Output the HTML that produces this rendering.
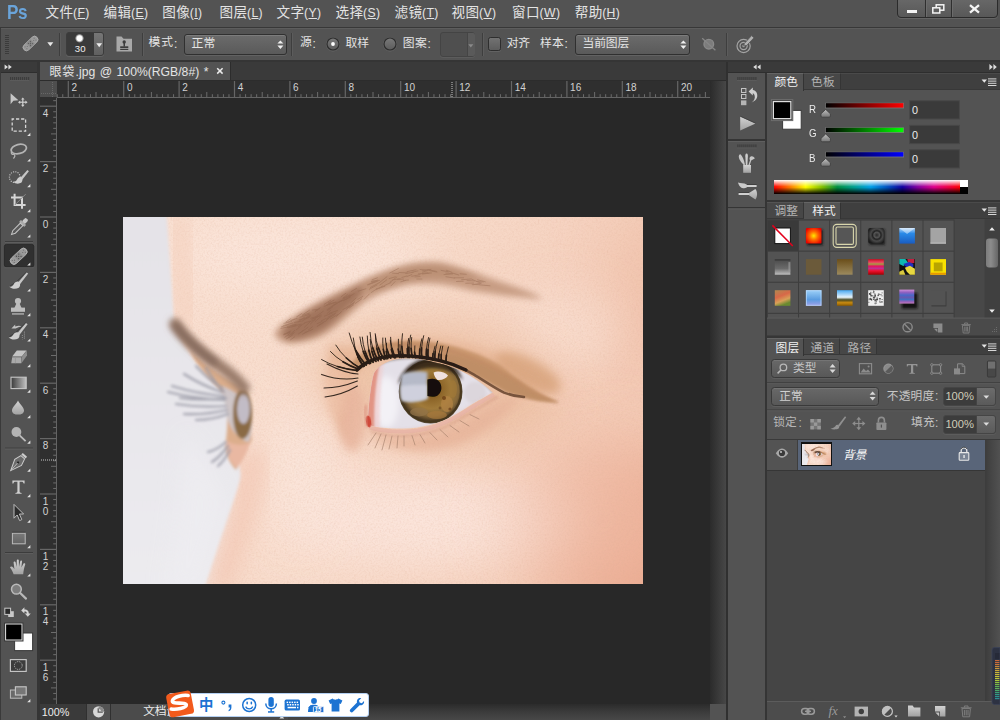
<!DOCTYPE html>
<html lang="zh"><head><meta charset="utf-8"><title>Photoshop</title>
<style>
html,body{margin:0;padding:0;background:#535353;}
body{width:1000px;height:720px;position:relative;overflow:hidden;font-family:"Liberation Sans",sans-serif;}
.a{position:absolute;display:block;}
.t{white-space:nowrap;}
.c{font-family:"Liberation Sans","Noto Sans CJK SC",sans-serif;}
u{text-decoration:underline;text-underline-offset:1px;text-decoration-thickness:1px;}
</style></head><body>
<div class="a" style="left:0.00px;top:0.00px;width:1000.00px;height:27.00px;background:#535353;"></div>
<div class="a" style="left:0.00px;top:27.00px;width:1000.00px;height:1.00px;background:#383838;"></div>
<div class="a" style="left:0.00px;top:28.00px;width:1000.00px;height:32.00px;background:#535353;border-top:1px solid #5d5d5d;box-sizing:border-box"></div>
<div class="a" style="left:0.00px;top:28.00px;width:1.00px;height:32.00px;background:#3a3a3a;"></div>
<div class="a" style="left:0.00px;top:60.00px;width:1000.00px;height:2.00px;background:#353535;"></div>
<div class="a" style="left:0.00px;top:62.00px;width:1000.00px;height:658.00px;background:#3a3a3a;"></div>
<div class="a" style="left:0.00px;top:62.00px;width:38.00px;height:11.00px;background:#3a3a3a;"></div>
<div class="a" style="left:0.00px;top:72.00px;width:38.00px;height:1.00px;background:#2e2e2e;"></div>
<div class="a" style="left:1.00px;top:73.00px;width:36.00px;height:647.00px;background:#535353;"></div>
<div class="a" style="left:0.00px;top:62.00px;width:1.00px;height:658.00px;background:#3a3a3a;"></div>
<div class="a" style="left:37.00px;top:62.00px;width:3.00px;height:658.00px;background:#353535;"></div>
<div class="a" style="left:40.00px;top:62.00px;width:686.00px;height:18.00px;background:#3a3a3a;"></div>
<div class="a" style="left:40.00px;top:62.00px;width:190.00px;height:18.00px;background:#535353;"></div>
<div class="a" style="left:230.00px;top:62.00px;width:1.00px;height:18.00px;background:#2c2c2c;"></div>
<div class="a" style="left:40.00px;top:80.00px;width:686.00px;height:1.00px;background:#2c2c2c;"></div>
<div class="a" style="left:40.00px;top:81.00px;width:670.00px;height:17.00px;background:#2f2f2f;"></div>
<div class="a" style="left:40.00px;top:98.00px;width:17.00px;height:606.00px;background:#2f2f2f;"></div>
<div class="a" style="left:40.00px;top:81.00px;width:17.00px;height:16.00px;background:#4e4e4e;"></div>
<div class="a" style="left:57.00px;top:98.00px;width:653.00px;height:606.00px;background:#282828;"></div>
<div class="a" style="left:710.00px;top:81.00px;width:16.00px;height:623.00px;background:linear-gradient(90deg,#2b2b2b,#474747);"></div>
<div class="a" style="left:726.00px;top:62.00px;width:2.00px;height:658.00px;background:#303030;"></div>
<div class="a" style="left:40.00px;top:704.00px;width:686.00px;height:16.00px;background:#4b4b4b;"></div>
<div class="a" style="left:288.00px;top:704.00px;width:422.00px;height:16.00px;background:linear-gradient(#2b2b2b,#3a3a3a 45%,#484848);"></div>
<div class="a" style="left:710.00px;top:704.00px;width:16.00px;height:16.00px;background:#535353;"></div>
<svg class="a" style="left:279.00px;top:715.00px;" width="6" height="4" viewBox="0 0 6 4"><path d="M0.4 3.4L2.8 0.6L5.2 3.4Z" fill="#e0e0e0"/></svg>
<div class="a" style="left:40.00px;top:704.00px;width:46.00px;height:16.00px;background:#3a3a3a;"></div>
<div class="a" style="left:87.00px;top:704.00px;width:23.00px;height:16.00px;background:#535353;"></div>
<div class="a" style="left:86.00px;top:704.00px;width:1.00px;height:16.00px;background:#303030;"></div>
<div class="a" style="left:110.00px;top:704.00px;width:1.00px;height:16.00px;background:#303030;"></div>
<div class="a" style="left:728.00px;top:62.00px;width:272.00px;height:10.00px;background:#3a3a3a;"></div>
<div class="a" style="left:728.00px;top:72.00px;width:272.00px;height:1.00px;background:#2e2e2e;"></div>
<div class="a" style="left:728.00px;top:73.00px;width:37.00px;height:647.00px;background:#535353;"></div>
<div class="a" style="left:765.00px;top:73.00px;width:2.00px;height:647.00px;background:#353535;"></div>
<div class="a" style="left:767.00px;top:73.00px;width:233.00px;height:647.00px;background:#535353;"></div>
<div class="a t" style="left:7.40px;top:1.60px;font-size:20.40px;line-height:20.40px;color:#6aa4da;font-weight:bold;letter-spacing:-0.4px;transform:scaleX(0.84);transform-origin:0 0">Ps</div>
<div class="a t c" style="left:45.50px;top:6.20px;font-size:13.60px;line-height:13.60px;color:#e4e4e4;letter-spacing:0.4px">文件</div>
<div class="a t" style="left:73.00px;top:7.00px;font-size:12.20px;line-height:12.20px;color:#e4e4e4;letter-spacing:0.35px">(<u>F</u>)</div>
<div class="a t c" style="left:103.50px;top:6.20px;font-size:13.60px;line-height:13.60px;color:#e4e4e4;letter-spacing:0.4px">编辑</div>
<div class="a t" style="left:131.00px;top:7.00px;font-size:12.20px;line-height:12.20px;color:#e4e4e4;letter-spacing:0.35px">(<u>E</u>)</div>
<div class="a t c" style="left:162.30px;top:6.20px;font-size:13.60px;line-height:13.60px;color:#e4e4e4;letter-spacing:0.4px">图像</div>
<div class="a t" style="left:189.80px;top:7.00px;font-size:12.20px;line-height:12.20px;color:#e4e4e4;letter-spacing:0.35px">(<u>I</u>)</div>
<div class="a t c" style="left:219.50px;top:6.20px;font-size:13.60px;line-height:13.60px;color:#e4e4e4;letter-spacing:0.4px">图层</div>
<div class="a t" style="left:247.00px;top:7.00px;font-size:12.20px;line-height:12.20px;color:#e4e4e4;letter-spacing:0.35px">(<u>L</u>)</div>
<div class="a t c" style="left:276.50px;top:6.20px;font-size:13.60px;line-height:13.60px;color:#e4e4e4;letter-spacing:0.4px">文字</div>
<div class="a t" style="left:304.00px;top:7.00px;font-size:12.20px;line-height:12.20px;color:#e4e4e4;letter-spacing:0.35px">(<u>Y</u>)</div>
<div class="a t c" style="left:335.50px;top:6.20px;font-size:13.60px;line-height:13.60px;color:#e4e4e4;letter-spacing:0.4px">选择</div>
<div class="a t" style="left:363.00px;top:7.00px;font-size:12.20px;line-height:12.20px;color:#e4e4e4;letter-spacing:0.35px">(<u>S</u>)</div>
<div class="a t c" style="left:394.50px;top:6.20px;font-size:13.60px;line-height:13.60px;color:#e4e4e4;letter-spacing:0.4px">滤镜</div>
<div class="a t" style="left:422.00px;top:7.00px;font-size:12.20px;line-height:12.20px;color:#e4e4e4;letter-spacing:0.35px">(<u>T</u>)</div>
<div class="a t c" style="left:451.50px;top:6.20px;font-size:13.60px;line-height:13.60px;color:#e4e4e4;letter-spacing:0.4px">视图</div>
<div class="a t" style="left:479.00px;top:7.00px;font-size:12.20px;line-height:12.20px;color:#e4e4e4;letter-spacing:0.35px">(<u>V</u>)</div>
<div class="a t c" style="left:512.10px;top:6.20px;font-size:13.60px;line-height:13.60px;color:#e4e4e4;letter-spacing:0.4px">窗口</div>
<div class="a t" style="left:539.60px;top:7.00px;font-size:12.20px;line-height:12.20px;color:#e4e4e4;letter-spacing:0.35px">(<u>W</u>)</div>
<div class="a t c" style="left:574.70px;top:6.20px;font-size:13.60px;line-height:13.60px;color:#e4e4e4;letter-spacing:0.4px">帮助</div>
<div class="a t" style="left:602.20px;top:7.00px;font-size:12.20px;line-height:12.20px;color:#e4e4e4;letter-spacing:0.35px">(<u>H</u>)</div>
<svg class="a" style="left:5.00px;top:34.00px;" width="4" height="21" viewBox="0 0 4 21"><rect x="0" y="1" width="4" height="1" fill="#3b3b3b"/><rect x="0" y="3" width="4" height="1" fill="#3b3b3b"/><rect x="0" y="5" width="4" height="1" fill="#3b3b3b"/><rect x="0" y="7" width="4" height="1" fill="#3b3b3b"/><rect x="0" y="9" width="4" height="1" fill="#3b3b3b"/><rect x="0" y="11" width="4" height="1" fill="#3b3b3b"/><rect x="0" y="13" width="4" height="1" fill="#3b3b3b"/><rect x="0" y="15" width="4" height="1" fill="#3b3b3b"/><rect x="0" y="17" width="4" height="1" fill="#3b3b3b"/><rect x="0" y="19" width="4" height="1" fill="#3b3b3b"/></svg>
<svg class="a" style="left:21.00px;top:34.40px;" width="19" height="19" viewBox="0 0 19 19"><g transform="rotate(-44 9.5 9.5) translate(9.5 9.5) scale(0.9) translate(-9.5 -9.5)"><rect x="-0.5" y="5.7" width="20" height="7.6" rx="3.8" fill="#9a9a9a" stroke="#b4b4b4" stroke-width="0.8"/>
<rect x="6.3" y="6" width="6.4" height="7" fill="#8a8a8a"/>
<g fill="#5e5e5e"><circle cx="8" cy="7.8" r="0.7"/><circle cx="11" cy="7.8" r="0.7"/><circle cx="8" cy="11.2" r="0.7"/><circle cx="11" cy="11.2" r="0.7"/><circle cx="9.5" cy="9.5" r="0.7"/>
<circle cx="2.5" cy="8" r="0.5"/><circle cx="4.5" cy="9.5" r="0.5"/><circle cx="2.5" cy="11" r="0.5"/><circle cx="16.5" cy="8" r="0.5"/><circle cx="14.5" cy="9.5" r="0.5"/><circle cx="16.5" cy="11" r="0.5"/></g></g></svg>
<svg class="a" style="left:47.00px;top:42.00px;" width="7" height="5" viewBox="0 0 7 5"><path d="M0.3 0.3H6.3L3.3 4.2Z" fill="#e8e8e8"/></svg>
<div class="a" style="left:59.00px;top:33.00px;width:1.00px;height:23.00px;background:#3e3e3e;"></div>
<div class="a" style="left:60.00px;top:33.00px;width:1.00px;height:23.00px;background:#5c5c5c;"></div>
<div class="a" style="left:66.00px;top:32.00px;width:38.00px;height:24.00px;background:#3a3a3a;border:1px solid #3c3c3c;border-radius:3px;box-sizing:border-box;box-shadow:0 1px 0 #626262"></div>
<div class="a" style="left:94.00px;top:33.00px;width:9.00px;height:22.00px;background:linear-gradient(#767676,#606060);border-radius:0 2px 2px 0"></div>
<svg class="a" style="left:74.00px;top:33.00px;" width="11" height="11" viewBox="0 0 11 11"><defs><radialGradient id="bd"><stop offset="0.55" stop-color="#fff"/><stop offset="1" stop-color="#fff" stop-opacity="0"/></radialGradient></defs><circle cx="5.5" cy="5.3" r="4.6" fill="url(#bd)"/></svg>
<div class="a t" style="left:74.80px;top:44.20px;font-size:9.60px;line-height:9.60px;color:#f0f0f0;">30</div>
<svg class="a" style="left:96.00px;top:43.00px;" width="7" height="5" viewBox="0 0 7 5"><path d="M0.3 0.3H6.1L3.2 4.2Z" fill="#efefef"/></svg>
<svg class="a" style="left:116.00px;top:35.00px;" width="17" height="17" viewBox="0 0 17 17"><path d="M0.5 1.5H5.5L7.5 3.8H16V16.5H0.5Z" fill="#a9a9a9"/>
<circle cx="8.2" cy="7" r="1.7" fill="#3d3d3d"/><rect x="7.5" y="8" width="1.5" height="3.6" fill="#3d3d3d"/><path d="M4.2 11.3H12.3V13.2H4.2Z" fill="#3d3d3d"/><rect x="4.2" y="14" width="8.1" height="1" fill="#3d3d3d"/></svg>
<div class="a" style="left:142.00px;top:33.00px;width:1.00px;height:23.00px;background:#3e3e3e;"></div>
<div class="a" style="left:143.00px;top:33.00px;width:1.00px;height:23.00px;background:#5c5c5c;"></div>
<div class="a t c" style="left:148.60px;top:37.40px;font-size:11.80px;line-height:11.80px;color:#e4e4e4;letter-spacing:0.8px">模式</div>
<div class="a t" style="left:174.00px;top:38.00px;font-size:12.00px;line-height:12.00px;color:#e4e4e4;">:</div>
<div class="a" style="left:184.00px;top:34.00px;width:102.50px;height:20.50px;background:linear-gradient(#6b6b6b,#5a5a5a);border:1px solid #303030;border-radius:3px;box-sizing:border-box;box-shadow:0 1px 0 #626262, inset 0 1px 0 #7c7c7c"></div>
<svg class="a" style="left:276.50px;top:39.75px;" width="7" height="10" viewBox="0 0 7 10"><path d="M0.4 3.6L3.4 0.4L6.4 3.6Z M0.4 5.6L3.4 9L6.4 5.6Z" fill="#f0f0f0"/></svg>
<div class="a t c" style="left:191.60px;top:37.60px;font-size:11.80px;line-height:11.80px;color:#e4e4e4;letter-spacing:0.1px">正常</div>
<div class="a" style="left:291.00px;top:33.00px;width:1.00px;height:23.00px;background:#3e3e3e;"></div>
<div class="a" style="left:292.00px;top:33.00px;width:1.00px;height:23.00px;background:#5c5c5c;"></div>
<div class="a t c" style="left:300.00px;top:37.20px;font-size:11.80px;line-height:11.80px;color:#e4e4e4;">源</div>
<div class="a t" style="left:312.60px;top:38.00px;font-size:12.00px;line-height:12.00px;color:#e4e4e4;">:</div>
<svg class="a" style="left:325.20px;top:36.20px;" width="16" height="16" viewBox="0 0 16 16"><defs><linearGradient id="rg333" x2="0" y2="1"><stop offset="0" stop-color="#7a7a7a"/><stop offset="1" stop-color="#5c5c5c"/></linearGradient></defs><circle cx="8" cy="8.4" r="6.6" fill="none" stroke="#676767" stroke-width="1"/><circle cx="8" cy="8" r="6" fill="url(#rg333)" stroke="#2e2e2e" stroke-width="1.2"/><circle cx="8" cy="8" r="1.9" fill="#fff"/></svg>
<div class="a t c" style="left:345.60px;top:37.60px;font-size:11.80px;line-height:11.80px;color:#e4e4e4;letter-spacing:-0.1px">取样</div>
<svg class="a" style="left:382.00px;top:36.20px;" width="16" height="16" viewBox="0 0 16 16"><defs><linearGradient id="rg390" x2="0" y2="1"><stop offset="0" stop-color="#7a7a7a"/><stop offset="1" stop-color="#5c5c5c"/></linearGradient></defs><circle cx="8" cy="8.4" r="6.6" fill="none" stroke="#676767" stroke-width="1"/><circle cx="8" cy="8" r="6" fill="url(#rg390)" stroke="#2e2e2e" stroke-width="1.2"/></svg>
<div class="a t c" style="left:402.80px;top:37.60px;font-size:11.80px;line-height:11.80px;color:#e4e4e4;letter-spacing:0.4px">图案</div>
<div class="a t" style="left:427.60px;top:38.00px;font-size:12.00px;line-height:12.00px;color:#e4e4e4;">:</div>
<div class="a" style="left:440.00px;top:32.00px;width:35.00px;height:25.00px;background:#4f4f4f;border:1px solid #444;border-radius:3px;box-sizing:border-box;box-shadow:0 1px 0 #5c5c5c"></div>
<div class="a" style="left:466.50px;top:33.00px;width:7.50px;height:23.00px;background:#5a5a5a;border-left:1px solid #454545;border-radius:0 2px 2px 0"></div>
<svg class="a" style="left:468.00px;top:44.00px;" width="6" height="4" viewBox="0 0 6 4"><path d="M0.3 0.3H5.3L2.8 3.4Z" fill="#8a8a8a"/></svg>
<div class="a" style="left:482.00px;top:33.00px;width:1.00px;height:23.00px;background:#3e3e3e;"></div>
<div class="a" style="left:483.00px;top:33.00px;width:1.00px;height:23.00px;background:#5c5c5c;"></div>
<div class="a" style="left:488.00px;top:37.40px;width:13.40px;height:13.40px;background:linear-gradient(#727272,#5d5d5d);border:1px solid #2e2e2e;border-radius:2.5px;box-sizing:border-box;box-shadow:0 1px 0 #626262"></div>
<div class="a t c" style="left:506.80px;top:37.60px;font-size:11.80px;line-height:11.80px;color:#e4e4e4;letter-spacing:-0.4px">对齐</div>
<div class="a t c" style="left:540.00px;top:37.60px;font-size:11.80px;line-height:11.80px;color:#e4e4e4;letter-spacing:0.2px">样本</div>
<div class="a t" style="left:564.60px;top:38.00px;font-size:12.00px;line-height:12.00px;color:#e4e4e4;">:</div>
<div class="a" style="left:575.00px;top:34.00px;width:114.50px;height:20.50px;background:linear-gradient(#6b6b6b,#5a5a5a);border:1px solid #303030;border-radius:3px;box-sizing:border-box;box-shadow:0 1px 0 #626262, inset 0 1px 0 #7c7c7c"></div>
<svg class="a" style="left:679.50px;top:39.75px;" width="7" height="10" viewBox="0 0 7 10"><path d="M0.4 3.6L3.4 0.4L6.4 3.6Z M0.4 5.6L3.4 9L6.4 5.6Z" fill="#f0f0f0"/></svg>
<div class="a t c" style="left:582.60px;top:37.60px;font-size:11.80px;line-height:11.80px;color:#e4e4e4;letter-spacing:-0.2px">当前图层</div>
<svg class="a" style="left:700.00px;top:36.00px;" width="18" height="17" viewBox="0 0 18 17"><circle cx="8.8" cy="8.2" r="4.8" fill="#7c7c7c" stroke="#8a8a8a" stroke-width="1.4"/><path d="M2.2 2.2L15.4 14.2" stroke="#878787" stroke-width="1.3"/></svg>
<div class="a" style="left:726.00px;top:33.00px;width:1.00px;height:23.00px;background:#3e3e3e;"></div>
<div class="a" style="left:727.00px;top:33.00px;width:1.00px;height:23.00px;background:#5c5c5c;"></div>
<svg class="a" style="left:735.00px;top:34.00px;" width="20" height="21" viewBox="0 0 20 21"><g fill="none" stroke="#a4a4a4" stroke-width="1.2"><circle cx="8.6" cy="12" r="6.6"/><circle cx="8.6" cy="12" r="3.6"/></g><circle cx="8.6" cy="12" r="1.3" fill="#a4a4a4"/><path d="M9.5 9.3L16.6 1.6L19 3.8L11.8 11.4L8.6 12Z" fill="#b0b0b0" stroke="#535353" stroke-width="0.8"/></svg>
<div class="a" style="left:897.00px;top:-2.00px;width:101.00px;height:20.00px;background:linear-gradient(#686868,#585858);border:1px solid #2b2b2b;border-radius:0 0 4px 4px;box-sizing:border-box;box-shadow:0 1px 0 #646464"></div>
<div class="a" style="left:925.00px;top:0.00px;width:1.00px;height:17.00px;background:#2f2f2f;"></div>
<div class="a" style="left:926.00px;top:0.00px;width:1.00px;height:17.00px;background:#6c6c6c;"></div>
<div class="a" style="left:951.00px;top:0.00px;width:1.00px;height:17.00px;background:#2f2f2f;"></div>
<div class="a" style="left:952.00px;top:0.00px;width:1.00px;height:17.00px;background:#6c6c6c;"></div>
<div class="a" style="left:907.00px;top:9.60px;width:10.40px;height:3.00px;background:#f4f4f4;"></div>
<svg class="a" style="left:931.00px;top:3.00px;" width="15" height="12" viewBox="0 0 15 12"><g fill="none" stroke="#f4f4f4" stroke-width="1.5"><rect x="5.2" y="1.8" width="7.6" height="5.4"/><rect x="1.8" y="4.8" width="7" height="5.2" fill="#5e5e5e"/></g></svg>
<svg class="a" style="left:968.00px;top:4.00px;" width="13" height="10" viewBox="0 0 13 10"><path d="M2 1.2L11 8.6M11 1.2L2 8.6" stroke="#f4f4f4" stroke-width="2.3"/></svg>
<div class="a t c" style="left:49.60px;top:65.60px;font-size:12.00px;line-height:12.00px;color:#e4e4e4;letter-spacing:0.6px">眼袋</div>
<div class="a t" style="left:75.60px;top:65.80px;font-size:12.20px;line-height:12.20px;color:#e4e4e4;word-spacing:1.1px">.jpg @ 100%(RGB/8#) *</div>
<svg class="a" style="left:216.00px;top:67.00px;" width="8" height="8" viewBox="0 0 8 8"><path d="M1.2 1.2L6.6 6.6M6.6 1.2L1.2 6.6" stroke="#ececec" stroke-width="1.5"/></svg>
<svg class="a" style="left:40.00px;top:81.00px;" width="670" height="17" viewBox="0 0 670 17"><rect x="16.72" y="13.2" width="1" height="3.8" fill="#6c6c6c"/><rect x="22.26" y="13.2" width="1" height="3.8" fill="#6c6c6c"/><rect x="27.70" y="0" width="1.2" height="17" fill="#666"/><rect x="33.34" y="13.2" width="1" height="3.8" fill="#6c6c6c"/><rect x="38.88" y="13.2" width="1" height="3.8" fill="#6c6c6c"/><rect x="44.42" y="13.2" width="1" height="3.8" fill="#6c6c6c"/><rect x="49.96" y="13.2" width="1" height="3.8" fill="#6c6c6c"/><rect x="55.50" y="11" width="1" height="6" fill="#6c6c6c"/><rect x="61.04" y="13.2" width="1" height="3.8" fill="#6c6c6c"/><rect x="66.58" y="13.2" width="1" height="3.8" fill="#6c6c6c"/><rect x="72.12" y="13.2" width="1" height="3.8" fill="#6c6c6c"/><rect x="77.66" y="13.2" width="1" height="3.8" fill="#6c6c6c"/><rect x="83.10" y="0" width="1.2" height="17" fill="#666"/><rect x="88.74" y="13.2" width="1" height="3.8" fill="#6c6c6c"/><rect x="94.28" y="13.2" width="1" height="3.8" fill="#6c6c6c"/><rect x="99.82" y="13.2" width="1" height="3.8" fill="#6c6c6c"/><rect x="105.36" y="13.2" width="1" height="3.8" fill="#6c6c6c"/><rect x="110.90" y="11" width="1" height="6" fill="#6c6c6c"/><rect x="116.44" y="13.2" width="1" height="3.8" fill="#6c6c6c"/><rect x="121.98" y="13.2" width="1" height="3.8" fill="#6c6c6c"/><rect x="127.52" y="13.2" width="1" height="3.8" fill="#6c6c6c"/><rect x="133.06" y="13.2" width="1" height="3.8" fill="#6c6c6c"/><rect x="138.50" y="0" width="1.2" height="17" fill="#666"/><rect x="144.14" y="13.2" width="1" height="3.8" fill="#6c6c6c"/><rect x="149.68" y="13.2" width="1" height="3.8" fill="#6c6c6c"/><rect x="155.22" y="13.2" width="1" height="3.8" fill="#6c6c6c"/><rect x="160.76" y="13.2" width="1" height="3.8" fill="#6c6c6c"/><rect x="166.30" y="11" width="1" height="6" fill="#6c6c6c"/><rect x="171.84" y="13.2" width="1" height="3.8" fill="#6c6c6c"/><rect x="177.38" y="13.2" width="1" height="3.8" fill="#6c6c6c"/><rect x="182.92" y="13.2" width="1" height="3.8" fill="#6c6c6c"/><rect x="188.46" y="13.2" width="1" height="3.8" fill="#6c6c6c"/><rect x="193.90" y="0" width="1.2" height="17" fill="#666"/><rect x="199.54" y="13.2" width="1" height="3.8" fill="#6c6c6c"/><rect x="205.08" y="13.2" width="1" height="3.8" fill="#6c6c6c"/><rect x="210.62" y="13.2" width="1" height="3.8" fill="#6c6c6c"/><rect x="216.16" y="13.2" width="1" height="3.8" fill="#6c6c6c"/><rect x="221.70" y="11" width="1" height="6" fill="#6c6c6c"/><rect x="227.24" y="13.2" width="1" height="3.8" fill="#6c6c6c"/><rect x="232.78" y="13.2" width="1" height="3.8" fill="#6c6c6c"/><rect x="238.32" y="13.2" width="1" height="3.8" fill="#6c6c6c"/><rect x="243.86" y="13.2" width="1" height="3.8" fill="#6c6c6c"/><rect x="249.30" y="0" width="1.2" height="17" fill="#666"/><rect x="254.94" y="13.2" width="1" height="3.8" fill="#6c6c6c"/><rect x="260.48" y="13.2" width="1" height="3.8" fill="#6c6c6c"/><rect x="266.02" y="13.2" width="1" height="3.8" fill="#6c6c6c"/><rect x="271.56" y="13.2" width="1" height="3.8" fill="#6c6c6c"/><rect x="277.10" y="11" width="1" height="6" fill="#6c6c6c"/><rect x="282.64" y="13.2" width="1" height="3.8" fill="#6c6c6c"/><rect x="288.18" y="13.2" width="1" height="3.8" fill="#6c6c6c"/><rect x="293.72" y="13.2" width="1" height="3.8" fill="#6c6c6c"/><rect x="299.26" y="13.2" width="1" height="3.8" fill="#6c6c6c"/><rect x="304.70" y="0" width="1.2" height="17" fill="#666"/><rect x="310.34" y="13.2" width="1" height="3.8" fill="#6c6c6c"/><rect x="315.88" y="13.2" width="1" height="3.8" fill="#6c6c6c"/><rect x="321.42" y="13.2" width="1" height="3.8" fill="#6c6c6c"/><rect x="326.96" y="13.2" width="1" height="3.8" fill="#6c6c6c"/><rect x="332.50" y="11" width="1" height="6" fill="#6c6c6c"/><rect x="338.04" y="13.2" width="1" height="3.8" fill="#6c6c6c"/><rect x="343.58" y="13.2" width="1" height="3.8" fill="#6c6c6c"/><rect x="349.12" y="13.2" width="1" height="3.8" fill="#6c6c6c"/><rect x="354.66" y="13.2" width="1" height="3.8" fill="#6c6c6c"/><rect x="360.10" y="0" width="1.2" height="17" fill="#666"/><rect x="365.74" y="13.2" width="1" height="3.8" fill="#6c6c6c"/><rect x="371.28" y="13.2" width="1" height="3.8" fill="#6c6c6c"/><rect x="376.82" y="13.2" width="1" height="3.8" fill="#6c6c6c"/><rect x="382.36" y="13.2" width="1" height="3.8" fill="#6c6c6c"/><rect x="387.90" y="11" width="1" height="6" fill="#6c6c6c"/><rect x="393.44" y="13.2" width="1" height="3.8" fill="#6c6c6c"/><rect x="398.98" y="13.2" width="1" height="3.8" fill="#6c6c6c"/><rect x="404.52" y="13.2" width="1" height="3.8" fill="#6c6c6c"/><rect x="410.06" y="13.2" width="1" height="3.8" fill="#6c6c6c"/><rect x="415.50" y="0" width="1.2" height="17" fill="#666"/><rect x="421.14" y="13.2" width="1" height="3.8" fill="#6c6c6c"/><rect x="426.68" y="13.2" width="1" height="3.8" fill="#6c6c6c"/><rect x="432.22" y="13.2" width="1" height="3.8" fill="#6c6c6c"/><rect x="437.76" y="13.2" width="1" height="3.8" fill="#6c6c6c"/><rect x="443.30" y="11" width="1" height="6" fill="#6c6c6c"/><rect x="448.84" y="13.2" width="1" height="3.8" fill="#6c6c6c"/><rect x="454.38" y="13.2" width="1" height="3.8" fill="#6c6c6c"/><rect x="459.92" y="13.2" width="1" height="3.8" fill="#6c6c6c"/><rect x="465.46" y="13.2" width="1" height="3.8" fill="#6c6c6c"/><rect x="470.90" y="0" width="1.2" height="17" fill="#666"/><rect x="476.54" y="13.2" width="1" height="3.8" fill="#6c6c6c"/><rect x="482.08" y="13.2" width="1" height="3.8" fill="#6c6c6c"/><rect x="487.62" y="13.2" width="1" height="3.8" fill="#6c6c6c"/><rect x="493.16" y="13.2" width="1" height="3.8" fill="#6c6c6c"/><rect x="498.70" y="11" width="1" height="6" fill="#6c6c6c"/><rect x="504.24" y="13.2" width="1" height="3.8" fill="#6c6c6c"/><rect x="509.78" y="13.2" width="1" height="3.8" fill="#6c6c6c"/><rect x="515.32" y="13.2" width="1" height="3.8" fill="#6c6c6c"/><rect x="520.86" y="13.2" width="1" height="3.8" fill="#6c6c6c"/><rect x="526.30" y="0" width="1.2" height="17" fill="#666"/><rect x="531.94" y="13.2" width="1" height="3.8" fill="#6c6c6c"/><rect x="537.48" y="13.2" width="1" height="3.8" fill="#6c6c6c"/><rect x="543.02" y="13.2" width="1" height="3.8" fill="#6c6c6c"/><rect x="548.56" y="13.2" width="1" height="3.8" fill="#6c6c6c"/><rect x="554.10" y="11" width="1" height="6" fill="#6c6c6c"/><rect x="559.64" y="13.2" width="1" height="3.8" fill="#6c6c6c"/><rect x="565.18" y="13.2" width="1" height="3.8" fill="#6c6c6c"/><rect x="570.72" y="13.2" width="1" height="3.8" fill="#6c6c6c"/><rect x="576.26" y="13.2" width="1" height="3.8" fill="#6c6c6c"/><rect x="581.70" y="0" width="1.2" height="17" fill="#666"/><rect x="587.34" y="13.2" width="1" height="3.8" fill="#6c6c6c"/><rect x="592.88" y="13.2" width="1" height="3.8" fill="#6c6c6c"/><rect x="598.42" y="13.2" width="1" height="3.8" fill="#6c6c6c"/><rect x="603.96" y="13.2" width="1" height="3.8" fill="#6c6c6c"/><rect x="609.50" y="11" width="1" height="6" fill="#6c6c6c"/><rect x="615.04" y="13.2" width="1" height="3.8" fill="#6c6c6c"/><rect x="620.58" y="13.2" width="1" height="3.8" fill="#6c6c6c"/><rect x="626.12" y="13.2" width="1" height="3.8" fill="#6c6c6c"/><rect x="631.66" y="13.2" width="1" height="3.8" fill="#6c6c6c"/><rect x="637.10" y="0" width="1.2" height="17" fill="#666"/><rect x="642.74" y="13.2" width="1" height="3.8" fill="#6c6c6c"/><rect x="648.28" y="13.2" width="1" height="3.8" fill="#6c6c6c"/><rect x="653.82" y="13.2" width="1" height="3.8" fill="#6c6c6c"/><rect x="659.36" y="13.2" width="1" height="3.8" fill="#6c6c6c"/><rect x="664.90" y="11" width="1" height="6" fill="#6c6c6c"/><rect x="17" y="16" width="653" height="1" fill="#646464"/></svg>
<div class="a t" style="left:71.50px;top:83.20px;font-size:10.00px;line-height:10.00px;color:#d2d2d2;">2</div>
<div class="a t" style="left:126.90px;top:83.20px;font-size:10.00px;line-height:10.00px;color:#d2d2d2;">0</div>
<div class="a t" style="left:182.30px;top:83.20px;font-size:10.00px;line-height:10.00px;color:#d2d2d2;">2</div>
<div class="a t" style="left:237.70px;top:83.20px;font-size:10.00px;line-height:10.00px;color:#d2d2d2;">4</div>
<div class="a t" style="left:293.10px;top:83.20px;font-size:10.00px;line-height:10.00px;color:#d2d2d2;">6</div>
<div class="a t" style="left:348.50px;top:83.20px;font-size:10.00px;line-height:10.00px;color:#d2d2d2;">8</div>
<div class="a t" style="left:403.90px;top:83.20px;font-size:10.00px;line-height:10.00px;color:#d2d2d2;">10</div>
<div class="a t" style="left:459.30px;top:83.20px;font-size:10.00px;line-height:10.00px;color:#d2d2d2;">12</div>
<div class="a t" style="left:514.70px;top:83.20px;font-size:10.00px;line-height:10.00px;color:#d2d2d2;">14</div>
<div class="a t" style="left:570.10px;top:83.20px;font-size:10.00px;line-height:10.00px;color:#d2d2d2;">16</div>
<div class="a t" style="left:625.50px;top:83.20px;font-size:10.00px;line-height:10.00px;color:#d2d2d2;">18</div>
<div class="a t" style="left:680.90px;top:83.20px;font-size:10.00px;line-height:10.00px;color:#d2d2d2;">20</div>
<svg class="a" style="left:40.00px;top:98.00px;" width="17" height="606" viewBox="0 0 17 606"><rect x="13.2" y="2.16" width="3.8" height="1" fill="#6c6c6c"/><rect x="0" y="7.60" width="17" height="1.2" fill="#666"/><rect x="13.2" y="13.24" width="3.8" height="1" fill="#6c6c6c"/><rect x="13.2" y="18.78" width="3.8" height="1" fill="#6c6c6c"/><rect x="13.2" y="24.32" width="3.8" height="1" fill="#6c6c6c"/><rect x="13.2" y="29.86" width="3.8" height="1" fill="#6c6c6c"/><rect x="11" y="35.40" width="6" height="1" fill="#6c6c6c"/><rect x="13.2" y="40.94" width="3.8" height="1" fill="#6c6c6c"/><rect x="13.2" y="46.48" width="3.8" height="1" fill="#6c6c6c"/><rect x="13.2" y="52.02" width="3.8" height="1" fill="#6c6c6c"/><rect x="13.2" y="57.56" width="3.8" height="1" fill="#6c6c6c"/><rect x="0" y="63.00" width="17" height="1.2" fill="#666"/><rect x="13.2" y="68.64" width="3.8" height="1" fill="#6c6c6c"/><rect x="13.2" y="74.18" width="3.8" height="1" fill="#6c6c6c"/><rect x="13.2" y="79.72" width="3.8" height="1" fill="#6c6c6c"/><rect x="13.2" y="85.26" width="3.8" height="1" fill="#6c6c6c"/><rect x="11" y="90.80" width="6" height="1" fill="#6c6c6c"/><rect x="13.2" y="96.34" width="3.8" height="1" fill="#6c6c6c"/><rect x="13.2" y="101.88" width="3.8" height="1" fill="#6c6c6c"/><rect x="13.2" y="107.42" width="3.8" height="1" fill="#6c6c6c"/><rect x="13.2" y="112.96" width="3.8" height="1" fill="#6c6c6c"/><rect x="0" y="118.40" width="17" height="1.2" fill="#666"/><rect x="13.2" y="124.04" width="3.8" height="1" fill="#6c6c6c"/><rect x="13.2" y="129.58" width="3.8" height="1" fill="#6c6c6c"/><rect x="13.2" y="135.12" width="3.8" height="1" fill="#6c6c6c"/><rect x="13.2" y="140.66" width="3.8" height="1" fill="#6c6c6c"/><rect x="11" y="146.20" width="6" height="1" fill="#6c6c6c"/><rect x="13.2" y="151.74" width="3.8" height="1" fill="#6c6c6c"/><rect x="13.2" y="157.28" width="3.8" height="1" fill="#6c6c6c"/><rect x="13.2" y="162.82" width="3.8" height="1" fill="#6c6c6c"/><rect x="13.2" y="168.36" width="3.8" height="1" fill="#6c6c6c"/><rect x="0" y="173.80" width="17" height="1.2" fill="#666"/><rect x="13.2" y="179.44" width="3.8" height="1" fill="#6c6c6c"/><rect x="13.2" y="184.98" width="3.8" height="1" fill="#6c6c6c"/><rect x="13.2" y="190.52" width="3.8" height="1" fill="#6c6c6c"/><rect x="13.2" y="196.06" width="3.8" height="1" fill="#6c6c6c"/><rect x="11" y="201.60" width="6" height="1" fill="#6c6c6c"/><rect x="13.2" y="207.14" width="3.8" height="1" fill="#6c6c6c"/><rect x="13.2" y="212.68" width="3.8" height="1" fill="#6c6c6c"/><rect x="13.2" y="218.22" width="3.8" height="1" fill="#6c6c6c"/><rect x="13.2" y="223.76" width="3.8" height="1" fill="#6c6c6c"/><rect x="0" y="229.20" width="17" height="1.2" fill="#666"/><rect x="13.2" y="234.84" width="3.8" height="1" fill="#6c6c6c"/><rect x="13.2" y="240.38" width="3.8" height="1" fill="#6c6c6c"/><rect x="13.2" y="245.92" width="3.8" height="1" fill="#6c6c6c"/><rect x="13.2" y="251.46" width="3.8" height="1" fill="#6c6c6c"/><rect x="11" y="257.00" width="6" height="1" fill="#6c6c6c"/><rect x="13.2" y="262.54" width="3.8" height="1" fill="#6c6c6c"/><rect x="13.2" y="268.08" width="3.8" height="1" fill="#6c6c6c"/><rect x="13.2" y="273.62" width="3.8" height="1" fill="#6c6c6c"/><rect x="13.2" y="279.16" width="3.8" height="1" fill="#6c6c6c"/><rect x="0" y="284.60" width="17" height="1.2" fill="#666"/><rect x="13.2" y="290.24" width="3.8" height="1" fill="#6c6c6c"/><rect x="13.2" y="295.78" width="3.8" height="1" fill="#6c6c6c"/><rect x="13.2" y="301.32" width="3.8" height="1" fill="#6c6c6c"/><rect x="13.2" y="306.86" width="3.8" height="1" fill="#6c6c6c"/><rect x="11" y="312.40" width="6" height="1" fill="#6c6c6c"/><rect x="13.2" y="317.94" width="3.8" height="1" fill="#6c6c6c"/><rect x="13.2" y="323.48" width="3.8" height="1" fill="#6c6c6c"/><rect x="13.2" y="329.02" width="3.8" height="1" fill="#6c6c6c"/><rect x="13.2" y="334.56" width="3.8" height="1" fill="#6c6c6c"/><rect x="0" y="340.00" width="17" height="1.2" fill="#666"/><rect x="13.2" y="345.64" width="3.8" height="1" fill="#6c6c6c"/><rect x="13.2" y="351.18" width="3.8" height="1" fill="#6c6c6c"/><rect x="13.2" y="356.72" width="3.8" height="1" fill="#6c6c6c"/><rect x="13.2" y="362.26" width="3.8" height="1" fill="#6c6c6c"/><rect x="11" y="367.80" width="6" height="1" fill="#6c6c6c"/><rect x="13.2" y="373.34" width="3.8" height="1" fill="#6c6c6c"/><rect x="13.2" y="378.88" width="3.8" height="1" fill="#6c6c6c"/><rect x="13.2" y="384.42" width="3.8" height="1" fill="#6c6c6c"/><rect x="13.2" y="389.96" width="3.8" height="1" fill="#6c6c6c"/><rect x="0" y="395.40" width="17" height="1.2" fill="#666"/><rect x="13.2" y="401.04" width="3.8" height="1" fill="#6c6c6c"/><rect x="13.2" y="406.58" width="3.8" height="1" fill="#6c6c6c"/><rect x="13.2" y="412.12" width="3.8" height="1" fill="#6c6c6c"/><rect x="13.2" y="417.66" width="3.8" height="1" fill="#6c6c6c"/><rect x="11" y="423.20" width="6" height="1" fill="#6c6c6c"/><rect x="13.2" y="428.74" width="3.8" height="1" fill="#6c6c6c"/><rect x="13.2" y="434.28" width="3.8" height="1" fill="#6c6c6c"/><rect x="13.2" y="439.82" width="3.8" height="1" fill="#6c6c6c"/><rect x="13.2" y="445.36" width="3.8" height="1" fill="#6c6c6c"/><rect x="0" y="450.80" width="17" height="1.2" fill="#666"/><rect x="13.2" y="456.44" width="3.8" height="1" fill="#6c6c6c"/><rect x="13.2" y="461.98" width="3.8" height="1" fill="#6c6c6c"/><rect x="13.2" y="467.52" width="3.8" height="1" fill="#6c6c6c"/><rect x="13.2" y="473.06" width="3.8" height="1" fill="#6c6c6c"/><rect x="11" y="478.60" width="6" height="1" fill="#6c6c6c"/><rect x="13.2" y="484.14" width="3.8" height="1" fill="#6c6c6c"/><rect x="13.2" y="489.68" width="3.8" height="1" fill="#6c6c6c"/><rect x="13.2" y="495.22" width="3.8" height="1" fill="#6c6c6c"/><rect x="13.2" y="500.76" width="3.8" height="1" fill="#6c6c6c"/><rect x="0" y="506.20" width="17" height="1.2" fill="#666"/><rect x="13.2" y="511.84" width="3.8" height="1" fill="#6c6c6c"/><rect x="13.2" y="517.38" width="3.8" height="1" fill="#6c6c6c"/><rect x="13.2" y="522.92" width="3.8" height="1" fill="#6c6c6c"/><rect x="13.2" y="528.46" width="3.8" height="1" fill="#6c6c6c"/><rect x="11" y="534.00" width="6" height="1" fill="#6c6c6c"/><rect x="13.2" y="539.54" width="3.8" height="1" fill="#6c6c6c"/><rect x="13.2" y="545.08" width="3.8" height="1" fill="#6c6c6c"/><rect x="13.2" y="550.62" width="3.8" height="1" fill="#6c6c6c"/><rect x="13.2" y="556.16" width="3.8" height="1" fill="#6c6c6c"/><rect x="0" y="561.60" width="17" height="1.2" fill="#666"/><rect x="13.2" y="567.24" width="3.8" height="1" fill="#6c6c6c"/><rect x="13.2" y="572.78" width="3.8" height="1" fill="#6c6c6c"/><rect x="13.2" y="578.32" width="3.8" height="1" fill="#6c6c6c"/><rect x="13.2" y="583.86" width="3.8" height="1" fill="#6c6c6c"/><rect x="11" y="589.40" width="6" height="1" fill="#6c6c6c"/><rect x="13.2" y="594.94" width="3.8" height="1" fill="#6c6c6c"/><rect x="13.2" y="600.48" width="3.8" height="1" fill="#6c6c6c"/><rect x="16" y="0" width="1" height="606" fill="#646464"/></svg>
<div class="a t" style="left:42.80px;top:108.80px;font-size:10.00px;line-height:10.00px;color:#d2d2d2;">4</div>
<div class="a t" style="left:42.80px;top:164.20px;font-size:10.00px;line-height:10.00px;color:#d2d2d2;">2</div>
<div class="a t" style="left:42.80px;top:219.60px;font-size:10.00px;line-height:10.00px;color:#d2d2d2;">0</div>
<div class="a t" style="left:42.80px;top:275.00px;font-size:10.00px;line-height:10.00px;color:#d2d2d2;">2</div>
<div class="a t" style="left:42.80px;top:330.40px;font-size:10.00px;line-height:10.00px;color:#d2d2d2;">4</div>
<div class="a t" style="left:42.80px;top:385.80px;font-size:10.00px;line-height:10.00px;color:#d2d2d2;">6</div>
<div class="a t" style="left:42.80px;top:441.20px;font-size:10.00px;line-height:10.00px;color:#d2d2d2;">8</div>
<div class="a t" style="left:42.80px;top:496.60px;font-size:10.00px;line-height:10.00px;color:#d2d2d2;">1</div>
<div class="a t" style="left:42.80px;top:506.60px;font-size:10.00px;line-height:10.00px;color:#d2d2d2;">0</div>
<div class="a t" style="left:42.80px;top:552.00px;font-size:10.00px;line-height:10.00px;color:#d2d2d2;">1</div>
<div class="a t" style="left:42.80px;top:562.00px;font-size:10.00px;line-height:10.00px;color:#d2d2d2;">2</div>
<div class="a t" style="left:42.80px;top:607.40px;font-size:10.00px;line-height:10.00px;color:#d2d2d2;">1</div>
<div class="a t" style="left:42.80px;top:617.40px;font-size:10.00px;line-height:10.00px;color:#d2d2d2;">4</div>
<div class="a t" style="left:42.80px;top:662.80px;font-size:10.00px;line-height:10.00px;color:#d2d2d2;">1</div>
<div class="a t" style="left:42.80px;top:672.80px;font-size:10.00px;line-height:10.00px;color:#d2d2d2;">6</div>
<svg class="a" style="left:40.00px;top:81.00px;" width="17" height="16" viewBox="0 0 17 16"><path d="M1 12.5H16M12.5 1V16" stroke="#686868" stroke-width="1" stroke-dasharray="1 1"/></svg>
<svg class="a" style="left:0.00px;top:62.00px;" width="38" height="658" viewBox="0 62 38 658"><defs><linearGradient id="ig" x2="0" y2="1"><stop offset="0" stop-color="#d2d2d2"/><stop offset="1" stop-color="#a2a2a2"/></linearGradient></defs><path d="M4.6 64.4L8 67L4.6 69.6ZM8.4 64.4L11.8 67L8.4 69.6Z" fill="#dcdcdc"/><rect x="10.2" y="77" width="1" height="3" fill="#383838"/><rect x="12.2" y="77" width="1" height="3" fill="#383838"/><rect x="14.2" y="77" width="1" height="3" fill="#383838"/><rect x="16.2" y="77" width="1" height="3" fill="#383838"/><rect x="18.2" y="77" width="1" height="3" fill="#383838"/><rect x="20.2" y="77" width="1" height="3" fill="#383838"/><rect x="22.2" y="77" width="1" height="3" fill="#383838"/><rect x="24.2" y="77" width="1" height="3" fill="#383838"/><rect x="26.2" y="77" width="1" height="3" fill="#383838"/><rect x="28.2" y="77" width="1" height="3" fill="#383838"/><rect x="10" y="80.2" width="19" height="0.8" fill="#5e5e5e"/><path d="M10.6 93.2L18.4 100.2L13.4 100.8L10.6 104.2Z" fill="#c6c6c6"/><g fill="#cfcfcf"><path d="M22.8 97.4L24.6 99.6H21ZM22.8 107L24.6 104.8H21ZM18 102.2L20.2 100.4V104ZM27.6 102.2L25.4 100.4V104Z"/><rect x="22.2" y="99" width="1.2" height="6.4"/><rect x="19.6" y="101.6" width="6.4" height="1.2"/></g><rect x="12.2" y="119" width="13.4" height="12.2" fill="none" stroke="#d6d6d6" stroke-width="1.3" stroke-dasharray="3.2 1.9" stroke-dashoffset="1.3"/><path d="M30.4 132.8V136.0H27.2Z" fill="#e2e2e2"/><g fill="none" stroke="#b4b4b4" stroke-width="1.8"><ellipse cx="18.8" cy="149" rx="7.8" ry="4.6" transform="rotate(-14 18.8 149)"/><path d="M11.6 151.6C10.6 153.6 12.4 155 14 154.2C15.4 155.2 15 157 13.4 158.4" stroke-width="1.3"/></g><path d="M30.4 158.4V161.6H27.2Z" fill="#e2e2e2"/><circle cx="14.8" cy="177.2" r="5.4" fill="none" stroke="#c8c8c8" stroke-width="1.1" stroke-dasharray="1.1 1.2"/><path d="M27.4 170L28.9 171.2L21.8 180.2L19.8 178.6Z" fill="#c6c6c6"/><path d="M20.4 177C22.8 177.8 23 181.2 21.2 182.8C18.6 184.2 15 183.8 13 181.8C15 181.8 16.4 181 17 179.6C17.8 178 19 176.8 20.4 177Z" fill="#cdcdcd"/><path d="M30.4 184.0V187.2H27.2Z" fill="#e2e2e2"/><g fill="none" stroke="#d6d6d6" stroke-width="2"><path d="M14.6 193.8V205H25.6M11 197.4H22V208.8"/></g><path d="M25.6 194.2L14.8 205" stroke="#8c8c8c" stroke-width="1"/><path d="M30.4 209.0V212.2H27.2Z" fill="#e2e2e2"/><g transform="rotate(45 19 227)"><rect x="17" y="215.6" width="4" height="5.6" rx="1.6" fill="#c8c8c8"/><rect x="15.4" y="220.6" width="7.2" height="2.6" rx="0.6" fill="#aaa"/><path d="M17.2 223.2H20.8V234L19 237.6L17.2 234Z" fill="#5a5a5a" stroke="#c4c4c4" stroke-width="1"/></g><path d="M30.4 234.4V237.6H27.2Z" fill="#e2e2e2"/><rect x="5" y="241.0" width="28" height="1" fill="#3c3c3c"/><rect x="5" y="242.0" width="28" height="1" fill="#5d5d5d"/><rect x="4.4" y="244.4" width="29.4" height="22.6" rx="2" fill="#303030" stroke="#262626" stroke-width="0.8"/><rect x="4.6" y="267.4" width="29" height="0.8" fill="#626262"/><g transform="rotate(-43 18.6 256.2)"><rect x="8.4" y="252.6" width="20.4" height="7.4" rx="3.7" fill="#9b9b9b" stroke="#c0c0c0" stroke-width="0.7"/><rect x="15.2" y="253" width="6.8" height="6.6" fill="#8c8c8c"/><g fill="#4e4e4e"><circle cx="17" cy="254.8" r="0.65"/><circle cx="20.2" cy="254.8" r="0.65"/><circle cx="17" cy="258" r="0.65"/><circle cx="20.2" cy="258" r="0.65"/><circle cx="18.6" cy="256.4" r="0.65"/><circle cx="11" cy="255" r="0.45"/><circle cx="13" cy="256.4" r="0.45"/><circle cx="11" cy="257.8" r="0.45"/><circle cx="26.2" cy="255" r="0.45"/><circle cx="24.2" cy="256.4" r="0.45"/><circle cx="26.2" cy="257.8" r="0.45"/></g></g><path d="M30.4 262.4V265.6H27.2Z" fill="#e2e2e2"/><g transform="translate(0.0 0.0)"><path d="M10 286L16 282.2L26.6 272" stroke="#3c3c3c" stroke-width="1" fill="none"/><path d="M26.6 272.4L28.2 273.6L19.8 284.6L17.6 283Z" fill="#c6c6c6"/><path d="M18 281.6C20.6 282.4 20.8 286.2 18.8 287.8C15.8 289.5 11.6 289 9.2 286.8C11.4 286.8 13 285.8 13.8 284.2C14.6 282.6 16.2 281.4 18 281.6Z" fill="#cdcdcd"/></g><path d="M30.4 288.4V291.6H27.2Z" fill="#e2e2e2"/><g fill="#bdbdbd"><circle cx="18" cy="301" r="3.1"/><path d="M16.6 303H19.4L21.6 308H14.4Z"/><rect x="11" y="307.6" width="14" height="4.2"/><rect x="12" y="313.4" width="12" height="1.1" fill="#c9c9c9"/></g><path d="M30.4 313.0V316.2H27.2Z" fill="#e2e2e2"/><path d="M11.4 328.6L15.2 324.4V326.4C18 325.4 20.4 325.6 21.6 326.4C19.6 326.6 17 327.4 15.6 328.6Z" fill="#c2c2c2"/><g transform="translate(-0.6 50.6)"><path d="M10 286L16 282.2L26.6 272" stroke="#3c3c3c" stroke-width="1" fill="none"/><path d="M26.6 272.4L28.2 273.6L19.8 284.6L17.6 283Z" fill="#c6c6c6"/><path d="M18 281.6C20.6 282.4 20.8 286.2 18.8 287.8C15.8 289.5 11.6 289 9.2 286.8C11.4 286.8 13 285.8 13.8 284.2C14.6 282.6 16.2 281.4 18 281.6Z" fill="#cdcdcd"/></g><path d="M24.4 331.6V338.6" stroke="#9a9a9a" stroke-width="1" stroke-dasharray="1 1"/><path d="M22.4 335V339.4" stroke="#8a8a8a" stroke-width="1" stroke-dasharray="1 1"/><path d="M30.4 338.4V341.6H27.2Z" fill="#e2e2e2"/><path d="M16.8 350.4L26.6 350.4L21.8 356.6L12.2 356.6Z" fill="#c3c3c3"/><path d="M26.8 350.6L27 355.4L21.6 363L21.9 356.8Z" fill="#8d8d8d"/><path d="M12.2 357.2H21.4V363.2H11.2Z" fill="#aaaaaa"/><path d="M15.4 357.2V363.2" stroke="#959595" stroke-width="0.8"/><path d="M30.4 364.0V367.2H27.2Z" fill="#e2e2e2"/><defs><linearGradient id="gt"><stop offset="0" stop-color="#3a3a3a"/><stop offset="1" stop-color="#c0c0c0"/></linearGradient></defs><rect x="11" y="377.2" width="15.2" height="11.4" fill="url(#gt)" stroke="#c6c6c6" stroke-width="1.1"/><path d="M30.4 389.6V392.8H27.2Z" fill="#e2e2e2"/><path d="M18 400.4C19.4 404 24 407 24 410.4C24 413.2 21.4 414.6 18 414.6C14.6 414.6 12 413.2 12 410.4C12 407 16.6 404 18 400.4Z" fill="url(#ig)"/><path d="M30.4 415.0V418.2H27.2Z" fill="#e2e2e2"/><circle cx="16.4" cy="432" r="4.9" fill="#b4b4b4"/><path d="M19.6 435.4L25.6 441.2" stroke="#bdbdbd" stroke-width="1.8"/><path d="M30.4 440.6V443.8H27.2Z" fill="#e2e2e2"/><rect x="5" y="447.6" width="28" height="1" fill="#3c3c3c"/><rect x="5" y="448.6" width="28" height="1" fill="#5d5d5d"/><g transform="rotate(42 18.5 462)"><path d="M15.6 452.4H21.4V454.6H15.6Z" fill="#cdcdcd"/><path d="M16 455.6H21L23 462.6L18.5 473.6L14 462.6Z" fill="#6a6a6a" stroke="#cdcdcd" stroke-width="1"/><circle cx="18.5" cy="462.6" r="1.1" fill="#222"/><path d="M18.5 463.4V472" stroke="#cdcdcd" stroke-width="0.7"/></g><path d="M30.4 468.6V471.8H27.2Z" fill="#e2e2e2"/><path d="M12.4 480.4H24.6V483.6H23.6C23.4 482.2 22.8 481.8 21.6 481.8H19.6V491.6C19.6 492.6 20 492.8 21.6 492.9V493.8H15.4V492.9C17 492.8 17.4 492.6 17.4 491.6V481.8H15.4C14.2 481.8 13.6 482.2 13.4 483.6H12.4Z" fill="#cfcfcf"/><path d="M30.4 494.0V497.2H27.2Z" fill="#e2e2e2"/><path d="M14 504.4L23.6 514H19.4L21.8 519.6L19.6 520.6L17.2 515L14 518.2Z" fill="#2c2c2c" stroke="#bdbdbd" stroke-width="1"/><path d="M30.4 519.6V522.8H27.2Z" fill="#e2e2e2"/><defs><linearGradient id="rt" x2="0" y2="1"><stop offset="0" stop-color="#7a7a7a"/><stop offset="1" stop-color="#646464"/></linearGradient></defs><rect x="12.4" y="533.2" width="12.8" height="10.6" fill="url(#rt)" stroke="#bcbcbc" stroke-width="1"/><rect x="12" y="531.6" width="13.6" height="1" fill="#454545"/><path d="M30.4 545.0V548.2H27.2Z" fill="#e2e2e2"/><rect x="5" y="552.0" width="28" height="1" fill="#3c3c3c"/><rect x="5" y="553.0" width="28" height="1" fill="#5d5d5d"/><path d="M13.6 574.2C12.8 571.6 11.6 569.4 10 567.4C10.6 566.2 12.2 566.4 13.2 567.6L14.4 569.2L13.6 562.4C13.6 561.2 15.4 561 15.6 562.2L16.6 567L16.8 560.6C16.8 559.2 18.8 559.2 18.8 560.6L19 567L20.2 561.4C20.4 560.2 22.2 560.4 22 561.8L21.4 567.6L23.4 563.8C24 562.8 25.6 563.4 25.2 564.6C24.2 567.4 23.6 570.8 23.2 574.2Z" fill="url(#ig)"/><path d="M30.4 573.4V576.6H27.2Z" fill="#e2e2e2"/><circle cx="16.4" cy="589.2" r="4.9" fill="#7d7d7d" stroke="#b9b9b9" stroke-width="1.5"/><path d="M20.2 593L26 598.6" stroke="#b9b9b9" stroke-width="2.2" stroke-linecap="round"/><rect x="8.2" y="611.2" width="5.6" height="5.8" fill="#c8c8c8"/><rect x="4.8" y="608.2" width="5.8" height="6.2" fill="#2a2a2a" stroke="#c8c8c8" stroke-width="1"/><path d="M21.2 610.4L24.4 607.2V609.4C27.8 609.4 28.8 611.2 28.8 613.4H30.8L27.8 616.8L24.8 613.4H26.8C26.8 612 26.2 611.4 24.4 611.4V613.6Z" fill="#d4d4d4"/><rect x="14.6" y="633" width="18" height="17.6" fill="#fff" stroke="#3a3a3a" stroke-width="1"/><rect x="4.6" y="623" width="18.4" height="18" fill="#000" stroke="#3a3a3a" stroke-width="1"/><rect x="5.6" y="624" width="16.4" height="16" fill="none" stroke="#e8e8e8" stroke-width="1"/><rect x="10.4" y="659.6" width="15.8" height="11.8" fill="#3c3c3c" stroke="#c4c4c4" stroke-width="1.2"/><circle cx="18.3" cy="665.5" r="3.9" fill="none" stroke="#bdbdbd" stroke-width="1" stroke-dasharray="1 1.05"/><rect x="10.4" y="690" width="11.4" height="8.2" fill="#6a6a6a" stroke="#bcbcbc" stroke-width="1"/><rect x="15.4" y="686.8" width="10.8" height="8.2" fill="#777" stroke="#c8c8c8" stroke-width="1.1"/><path d="M30.4 699V702.2H27.2Z" fill="#e2e2e2"/></svg>
<svg class="a" style="left:728.00px;top:62.00px;" width="272" height="150" viewBox="728 62 272 150"><path d="M756.6 64.4L753.2 67L756.6 69.6ZM760.6 64.4L757.2 67L760.6 69.6Z" fill="#dcdcdc"/><path d="M989.4 64L992.8 67L989.4 70ZM993.4 64L996.8 67L993.4 70Z" fill="#dcdcdc"/><rect x="728" y="139" width="37" height="2" fill="#353535"/><rect x="728" y="141" width="37" height="1" fill="#5f5f5f"/><rect x="728" y="207" width="37" height="1.4" fill="#353535"/><rect x="728" y="208.4" width="37" height="1" fill="#5f5f5f"/><rect x="737.4" y="77.0" width="1" height="3" fill="#383838"/><rect x="739.4" y="77.0" width="1" height="3" fill="#383838"/><rect x="741.4" y="77.0" width="1" height="3" fill="#383838"/><rect x="743.4" y="77.0" width="1" height="3" fill="#383838"/><rect x="745.4" y="77.0" width="1" height="3" fill="#383838"/><rect x="747.4" y="77.0" width="1" height="3" fill="#383838"/><rect x="749.4" y="77.0" width="1" height="3" fill="#383838"/><rect x="751.4" y="77.0" width="1" height="3" fill="#383838"/><rect x="753.4" y="77.0" width="1" height="3" fill="#383838"/><rect x="755.4" y="77.0" width="1" height="3" fill="#383838"/><rect x="737" y="80.2" width="19.6" height="0.8" fill="#5e5e5e"/><rect x="737.4" y="144.4" width="1" height="3" fill="#383838"/><rect x="739.4" y="144.4" width="1" height="3" fill="#383838"/><rect x="741.4" y="144.4" width="1" height="3" fill="#383838"/><rect x="743.4" y="144.4" width="1" height="3" fill="#383838"/><rect x="745.4" y="144.4" width="1" height="3" fill="#383838"/><rect x="747.4" y="144.4" width="1" height="3" fill="#383838"/><rect x="749.4" y="144.4" width="1" height="3" fill="#383838"/><rect x="751.4" y="144.4" width="1" height="3" fill="#383838"/><rect x="753.4" y="144.4" width="1" height="3" fill="#383838"/><rect x="755.4" y="144.4" width="1" height="3" fill="#383838"/><rect x="737" y="147.6" width="19.6" height="0.8" fill="#5e5e5e"/><g fill="none" stroke="#c4c4c4" stroke-width="1"><rect x="741.5" y="88.5" width="4.4" height="4"/><rect x="741.5" y="94.5" width="4.4" height="4"/></g><rect x="741" y="100.4" width="5.4" height="4.8" fill="#b4b4b4"/><path d="M748.6 91.4L752.8 87.6V90C756.6 90.6 758 94.4 757 97.6C756.2 100 754.2 101.6 751.6 102.4C754.4 100.6 755.4 97.6 754.6 95.4C754.2 94 753.6 93.4 752.8 93.2V95.4Z" fill="#cfcfcf"/><path d="M740.2 116.4L755.6 123.4L740.2 130.6Z" fill="url(#ig)"/><path d="M740.2 116.2L755.6 123.2" stroke="#3a3a3a" stroke-width="0.8"/><rect x="743.2" y="165" width="7.8" height="7.8" fill="url(#ig)"/><path d="M744 165.4C742.4 163 739.2 160.6 738.8 157C738.6 155.4 739.6 154 740.4 154.2C742.6 156 743.8 159.4 745 164.6Z" fill="#c6c6c6"/><path d="M745.4 157.4C745 155.4 745.4 153.4 746.6 153.4C747.8 153.4 748.2 155.4 747.8 157.4L747.4 165H745.8Z" fill="#cdcdcd"/><path d="M748.4 165L750 160.2C749 158.4 749.6 156.6 751.4 156.2C753 156 754.6 157 754.8 158.6C753.6 159.4 752.2 160 751.2 160.6L749.8 165Z" fill="#c6c6c6"/><path d="M738 182.4C740.4 183.4 744 182.6 746.6 184.4C747.4 185.4 747.4 186.8 746.6 187.6C744 189.2 739.6 188.4 738 182.4Z" fill="#cacaca"/><rect x="747" y="185" width="9.6" height="2" fill="#cfcfcf"/><rect x="747" y="184" width="9.6" height="0.8" fill="#3c3c3c"/><rect x="738.6" y="193" width="10.6" height="2" fill="#cfcfcf"/><rect x="738.6" y="192" width="10.6" height="0.8" fill="#3c3c3c"/><path d="M749 193L755.4 189C757.6 191.6 757.6 196.6 755.4 199.4L749 195.2Z" fill="url(#ig)"/></svg>
<div class="a" style="left:767.00px;top:73.00px;width:233.00px;height:16.60px;background:#3f3f3f;border-top:1px solid #4a4a4a;box-sizing:border-box"></div>
<div class="a" style="left:767.00px;top:89.00px;width:233.00px;height:1.00px;background:#383838;"></div>
<div class="a" style="left:767.00px;top:73.00px;width:37.00px;height:17.60px;background:#535353;border-top:1px solid #646464;border-right:1px solid #333;box-sizing:border-box"></div>
<div class="a t c" style="left:774.40px;top:76.20px;font-size:11.70px;line-height:11.70px;color:#f2f2f2;letter-spacing:0.2px">颜色</div>
<div class="a" style="left:804.00px;top:73.00px;width:36.60px;height:16.00px;background:#474747;border-top:1px solid #545454;border-right:1px solid #353535;box-sizing:border-box"></div>
<div class="a t c" style="left:811.00px;top:76.20px;font-size:11.70px;line-height:11.70px;color:#b4b4b4;letter-spacing:0.2px">色板</div>
<svg class="a" style="left:981.00px;top:77.60px;" width="16" height="9" viewBox="0 0 16 9"><path d="M0.6 1.6H6L3.3 4.8Z" fill="#e4e4e4"/><g fill="#d8d8d8"><rect x="7" y="0.4" width="8.4" height="1"/><rect x="7" y="2.6" width="8.4" height="1"/><rect x="7" y="4.8" width="8.4" height="1"/><rect x="7" y="7" width="8.4" height="1"/></g></svg>
<svg class="a" style="left:767.00px;top:90.00px;" width="233" height="112" viewBox="767 90 233 112"><rect x="782.6" y="110.4" width="18.6" height="18.8" fill="#fff" stroke="#3a3a3a" stroke-width="1"/><rect x="771.4" y="99.6" width="21.4" height="21" fill="#444" stroke="#6e6e6e" stroke-width="1"/><rect x="773.4" y="101.6" width="17.4" height="17" fill="#000" stroke="#dedede" stroke-width="1.2"/><defs><linearGradient id="th" x2="0" y2="1"><stop offset="0" stop-color="#c0c0c0"/><stop offset="1" stop-color="#767676"/></linearGradient><linearGradient id="slR"><stop offset="0" stop-color="#000"/><stop offset="1" stop-color="#ff0000"/></linearGradient><linearGradient id="slG"><stop offset="0" stop-color="#000"/><stop offset="1" stop-color="#00ff00"/></linearGradient><linearGradient id="slB"><stop offset="0" stop-color="#000"/><stop offset="1" stop-color="#0000ff"/></linearGradient></defs><rect x="825" y="102.8" width="79" height="5.6" fill="#7a7a7a"/><rect x="825.8" y="103.2" width="77.6" height="4.4" fill="url(#slR)"/><path d="M825.7 109.4L830.4 113.8V116.0Q830.4 117.2 829.2 117.2H822.2Q821 117.2 821 116.0V113.8Z" fill="url(#th)" stroke="#3c3c3c" stroke-width="0.8"/><rect x="909.6" y="100.8" width="49.8" height="18.2" fill="#3a3a3a" stroke="#484848" stroke-width="1"/><rect x="825" y="127.4" width="79" height="5.6" fill="#7a7a7a"/><rect x="825.8" y="127.8" width="77.6" height="4.4" fill="url(#slG)"/><path d="M825.7 134.0L830.4 138.4V140.6Q830.4 141.8 829.2 141.8H822.2Q821 141.8 821 140.6V138.4Z" fill="url(#th)" stroke="#3c3c3c" stroke-width="0.8"/><rect x="909.6" y="125.4" width="49.8" height="18.2" fill="#3a3a3a" stroke="#484848" stroke-width="1"/><rect x="825" y="151.8" width="79" height="5.6" fill="#7a7a7a"/><rect x="825.8" y="152.2" width="77.6" height="4.4" fill="url(#slB)"/><path d="M825.7 158.4L830.4 162.8V165.0Q830.4 166.2 829.2 166.2H822.2Q821 166.2 821 165.0V162.8Z" fill="url(#th)" stroke="#3c3c3c" stroke-width="0.8"/><rect x="909.6" y="149.8" width="49.8" height="18.2" fill="#3a3a3a" stroke="#484848" stroke-width="1"/></svg>
<div class="a t" style="left:809.40px;top:103.70px;font-size:10.80px;line-height:10.80px;color:#ececec;transform:scaleX(0.9);transform-origin:0 0">R</div>
<div class="a t" style="left:912.00px;top:105.00px;font-size:10.80px;line-height:10.80px;color:#ececec;">0</div>
<div class="a t" style="left:809.40px;top:128.30px;font-size:10.80px;line-height:10.80px;color:#ececec;transform:scaleX(0.9);transform-origin:0 0">G</div>
<div class="a t" style="left:912.00px;top:129.60px;font-size:10.80px;line-height:10.80px;color:#ececec;">0</div>
<div class="a t" style="left:809.40px;top:152.70px;font-size:10.80px;line-height:10.80px;color:#ececec;transform:scaleX(0.9);transform-origin:0 0">B</div>
<div class="a t" style="left:912.00px;top:154.00px;font-size:10.80px;line-height:10.80px;color:#ececec;">0</div>
<div class="a" style="left:774.00px;top:179.60px;width:186.00px;height:14.40px;background:linear-gradient(rgba(255,255,255,1) 0%,rgba(255,255,255,0) 48%,rgba(0,0,0,0) 52%,rgba(0,0,0,1) 100%),linear-gradient(90deg,#ff0000 0%,#ff8000 9%,#ffff00 17%,#80c000 26%,#009040 34%,#00a090 43%,#00a0e8 52%,#0050c0 61%,#1000a0 69%,#8000a0 77%,#e0008c 86%,#f00040 94%,#ff0000 100%);"></div>
<div class="a" style="left:960.00px;top:179.60px;width:8.20px;height:7.40px;background:#fff;"></div>
<div class="a" style="left:960.00px;top:187.00px;width:8.20px;height:7.00px;background:#000;"></div>
<div class="a" style="left:767.00px;top:200.00px;width:233.00px;height:2.00px;background:#363636;"></div>
<div class="a" style="left:767.00px;top:202.00px;width:233.00px;height:16.60px;background:#3f3f3f;border-top:1px solid #4a4a4a;box-sizing:border-box"></div>
<div class="a" style="left:767.00px;top:218.00px;width:233.00px;height:1.00px;background:#383838;"></div>
<div class="a" style="left:767.00px;top:202.00px;width:36.60px;height:16.00px;background:#474747;border-top:1px solid #545454;border-right:1px solid #353535;box-sizing:border-box"></div>
<div class="a t c" style="left:774.40px;top:205.20px;font-size:11.70px;line-height:11.70px;color:#b4b4b4;letter-spacing:0.2px">调整</div>
<div class="a" style="left:803.60px;top:202.00px;width:37.40px;height:17.60px;background:#535353;border-top:1px solid #646464;border-right:1px solid #333;box-sizing:border-box"></div>
<div class="a t c" style="left:812.20px;top:205.20px;font-size:11.70px;line-height:11.70px;color:#f2f2f2;letter-spacing:0.2px">样式</div>
<svg class="a" style="left:981.00px;top:206.60px;" width="16" height="9" viewBox="0 0 16 9"><path d="M0.6 1.6H6L3.3 4.8Z" fill="#e4e4e4"/><g fill="#d8d8d8"><rect x="7" y="0.4" width="8.4" height="1"/><rect x="7" y="2.6" width="8.4" height="1"/><rect x="7" y="4.8" width="8.4" height="1"/><rect x="7" y="7" width="8.4" height="1"/></g></svg>
<svg class="a" style="left:767.00px;top:219.00px;" width="233" height="119" viewBox="767 219 233 119"><rect x="767" y="219" width="218" height="99" fill="#484848"/><rect x="767" y="219.4" width="187.6" height="98.6" fill="#3e3e3e"/><rect x="767.90" y="220.60" width="30.12" height="30.00" fill="#3a3a3a"/><rect x="799.02" y="220.60" width="30.12" height="30.00" fill="#535353"/><rect x="830.14" y="220.60" width="30.12" height="30.00" fill="#535353"/><rect x="861.26" y="220.60" width="30.12" height="30.00" fill="#535353"/><rect x="892.38" y="220.60" width="30.12" height="30.00" fill="#535353"/><rect x="923.50" y="220.60" width="30.12" height="30.00" fill="#535353"/><rect x="767.90" y="251.70" width="30.12" height="30.00" fill="#535353"/><rect x="799.02" y="251.70" width="30.12" height="30.00" fill="#535353"/><rect x="830.14" y="251.70" width="30.12" height="30.00" fill="#535353"/><rect x="861.26" y="251.70" width="30.12" height="30.00" fill="#535353"/><rect x="892.38" y="251.70" width="30.12" height="30.00" fill="#535353"/><rect x="923.50" y="251.70" width="30.12" height="30.00" fill="#535353"/><rect x="767.90" y="282.80" width="30.12" height="30.00" fill="#535353"/><rect x="799.02" y="282.80" width="30.12" height="30.00" fill="#535353"/><rect x="830.14" y="282.80" width="30.12" height="30.00" fill="#535353"/><rect x="861.26" y="282.80" width="30.12" height="30.00" fill="#535353"/><rect x="892.38" y="282.80" width="30.12" height="30.00" fill="#535353"/><rect x="923.50" y="282.80" width="30.12" height="30.00" fill="#535353"/><rect x="767.90" y="313.90" width="30.12" height="30.00" fill="#535353"/><rect x="799.02" y="313.90" width="30.12" height="30.00" fill="#535353"/><rect x="830.14" y="313.90" width="30.12" height="30.00" fill="#535353"/><rect x="861.26" y="313.90" width="30.12" height="30.00" fill="#535353"/><rect x="892.38" y="313.90" width="30.12" height="30.00" fill="#535353"/><rect x="923.50" y="313.90" width="30.12" height="30.00" fill="#535353"/><defs><radialGradient id="s01" cx="0.5" cy="0.5" r="0.6"><stop offset="0" stop-color="#ffe800"/><stop offset="0.45" stop-color="#ff6a00"/><stop offset="1" stop-color="#e80000"/></radialGradient><radialGradient id="s03" cx="0.55" cy="0.45" r="0.6"><stop offset="0" stop-color="#2a2a2a"/><stop offset="0.3" stop-color="#555"/><stop offset="0.45" stop-color="#222"/><stop offset="0.65" stop-color="#4a4a4a"/><stop offset="1" stop-color="#1c1c1c"/></radialGradient><linearGradient id="s04" x2="0" y2="1"><stop offset="0" stop-color="#b8d8f8"/><stop offset="0.35" stop-color="#2a8ae8"/><stop offset="1" stop-color="#1a5cc0"/></linearGradient><linearGradient id="s10" x2="0" y2="1"><stop offset="0" stop-color="#4a4a4a"/><stop offset="0.6" stop-color="#6a6a6a"/><stop offset="1" stop-color="#c0c0c0"/></linearGradient><linearGradient id="s12" x2="0" y2="1"><stop offset="0" stop-color="#6a4e1a"/><stop offset="1" stop-color="#9c8a5e"/></linearGradient><linearGradient id="s13" x2="0" y2="1"><stop offset="0" stop-color="#c01020"/><stop offset="0.2" stop-color="#f04060"/><stop offset="0.32" stop-color="#a0a040"/><stop offset="0.45" stop-color="#e81060"/><stop offset="0.6" stop-color="#c03090"/><stop offset="0.75" stop-color="#f01030"/><stop offset="1" stop-color="#a00000"/></linearGradient><linearGradient id="s20" x1="0" y1="0" x2="0.4" y2="1"><stop offset="0" stop-color="#b08850"/><stop offset="0.45" stop-color="#d86848"/><stop offset="0.75" stop-color="#d8a058"/><stop offset="1" stop-color="#6a8a30"/></linearGradient><linearGradient id="s21" x2="0" y2="1"><stop offset="0" stop-color="#9cd0f8"/><stop offset="0.6" stop-color="#5a9ce0"/><stop offset="1" stop-color="#a0a0e8"/></linearGradient><linearGradient id="s22" x2="0" y2="1"><stop offset="0" stop-color="#48a8f0"/><stop offset="0.45" stop-color="#e8f4fc"/><stop offset="0.62" stop-color="#4a4a20"/><stop offset="0.8" stop-color="#c88a10"/><stop offset="1" stop-color="#8a5a00"/></linearGradient><linearGradient id="s24" x2="0" y2="1"><stop offset="0" stop-color="#d090d8"/><stop offset="0.2" stop-color="#9060c0"/><stop offset="0.4" stop-color="#4868c8"/><stop offset="0.55" stop-color="#6858b0"/><stop offset="0.7" stop-color="#4070c0"/><stop offset="0.88" stop-color="#a060b8"/><stop offset="1" stop-color="#c080c0"/></linearGradient><filter id="bl1" x="-30%" y="-30%" width="160%" height="160%"><feGaussianBlur stdDeviation="1.2"/></filter></defs><rect x="774.8" y="228.0" width="15.6" height="15.6" fill="#fff" stroke="#111" stroke-width="1"/><path d="M772.4 225.4L792.8 246.0" stroke="#e2001c" stroke-width="1.5"/><rect x="807.3" y="229.6" width="15.6" height="15.6" fill="#151515" filter="url(#bl1)" opacity="0.9"/><rect x="805.9" y="228.0" width="15.6" height="15.6" rx="1" fill="url(#s01)"/><rect x="833.2" y="224.4" width="23.0" height="23.0" rx="3.6" fill="#545454" stroke="#d9d6ac" stroke-width="1.1"/><rect x="836.0" y="227.0" width="17.4" height="17.4" rx="1.4" fill="#565656" stroke="#d9d6ac" stroke-width="1.1"/><rect x="869.4" y="229.4" width="15.6" height="15.6" fill="#181818" filter="url(#bl1)" opacity="0.8"/><rect x="868.2" y="228.0" width="15.6" height="15.6" rx="2" fill="url(#s03)"/><rect x="899.3" y="228.0" width="15.6" height="15.6" fill="url(#s04)"/><path d="M899.3 228.0H914.9L907.1 234.0Z" fill="#fff" opacity="0.45"/><rect x="930.4" y="228.0" width="15.6" height="15.6" fill="#a4a4a4"/><rect x="930.4" y="242.6" width="15.6" height="1" fill="#c0c0c0"/><rect x="774.8" y="259.1" width="15.6" height="15.6" fill="url(#s10)"/><rect x="788.4" y="262.1" width="2" height="9.6" fill="#9a9a9a" opacity="0.7"/><rect x="774.8" y="259.1" width="15.6" height="1.6" fill="#3c3c3c"/><rect x="805.9" y="259.1" width="15.6" height="15.6" fill="#6b5a3a"/><rect x="837.0" y="259.1" width="15.6" height="15.6" fill="url(#s12)"/><rect x="868.2" y="259.1" width="15.6" height="15.6" fill="url(#s13)"/><g><rect x="899.3" y="259.1" width="15.6" height="15.6" fill="#101010"/><path d="M899.3 259.1h6l3 4l-5 3l-4 -2z" fill="#10b8b0"/><path d="M907.3 259.1h7v4l-6 1z" fill="#c02040"/><path d="M903.3 264.1l6 -2l4 2v3l-6 1z" fill="#2030c0"/><path d="M904.9 267.7l5 -2l5 3v6h-5l-3 -3z" fill="#e8d840"/><path d="M899.3 271.7l4 -2l2 5h-6z" fill="#d8c840"/></g><rect x="930.4" y="259.1" width="15.6" height="15.6" fill="#f8e000"/><rect x="933.8" y="262.5" width="8.8" height="8.8" fill="#b8a400"/><rect x="930.4" y="272.7" width="15.6" height="2" fill="#e89800"/><rect x="774.8" y="290.2" width="15.6" height="15.6" fill="url(#s20)"/><rect x="805.9" y="290.2" width="15.6" height="15.6" fill="url(#s21)"/><rect x="806.4" y="290.7" width="14.6" height="14.6" fill="none" stroke="#c0e0ff" stroke-width="1" opacity="0.7"/><rect x="837.0" y="290.2" width="15.6" height="15.6" fill="url(#s22)"/><rect x="868.2" y="290.2" width="15.6" height="15.6" fill="#f0f0f0"/><rect x="872.7" y="292.3" width="1.7" height="0.9" fill="#555"/><rect x="873.3" y="291.0" width="1.5" height="0.8" fill="#8a8a8a"/><rect x="874.0" y="293.6" width="1.6" height="0.9" fill="#555"/><rect x="881.4" y="299.0" width="1.6" height="0.9" fill="#8a8a8a"/><rect x="868.9" y="293.3" width="1.6" height="1.0" fill="#8a8a8a"/><rect x="870.2" y="291.8" width="1.2" height="1.8" fill="#777"/><rect x="869.6" y="298.2" width="1.1" height="0.9" fill="#555"/><rect x="876.1" y="298.9" width="1.5" height="1.4" fill="#444"/><rect x="874.7" y="303.1" width="1.3" height="1.1" fill="#777"/><rect x="877.9" y="293.6" width="1.6" height="1.4" fill="#444"/><rect x="878.4" y="294.2" width="2.2" height="0.9" fill="#8a8a8a"/><rect x="870.5" y="295.0" width="2.1" height="1.3" fill="#555"/><rect x="878.9" y="298.2" width="2.0" height="1.2" fill="#444"/><rect x="876.5" y="298.3" width="1.4" height="1.8" fill="#444"/><rect x="874.8" y="299.5" width="0.9" height="1.6" fill="#8a8a8a"/><rect x="872.1" y="295.6" width="1.7" height="0.8" fill="#8a8a8a"/><rect x="873.1" y="298.8" width="1.5" height="1.1" fill="#444"/><rect x="870.0" y="293.7" width="1.3" height="1.8" fill="#555"/><rect x="870.5" y="295.8" width="1.2" height="1.0" fill="#8a8a8a"/><rect x="880.3" y="294.1" width="1.4" height="1.2" fill="#8a8a8a"/><rect x="881.6" y="292.3" width="1.0" height="1.1" fill="#777"/><rect x="868.3" y="301.8" width="1.1" height="1.1" fill="#777"/><rect x="874.0" y="295.4" width="1.6" height="1.9" fill="#555"/><rect x="874.6" y="302.4" width="2.1" height="1.6" fill="#8a8a8a"/><rect x="873.7" y="295.7" width="1.5" height="1.3" fill="#777"/><rect x="869.1" y="293.1" width="1.0" height="1.2" fill="#555"/><rect x="869.6" y="298.1" width="1.6" height="1.9" fill="#555"/><rect x="869.1" y="293.1" width="1.3" height="1.6" fill="#444"/><rect x="876.6" y="296.8" width="1.0" height="1.4" fill="#8a8a8a"/><rect x="874.9" y="294.6" width="1.0" height="1.7" fill="#444"/><rect x="874.9" y="299.9" width="1.5" height="1.0" fill="#444"/><rect x="870.2" y="297.8" width="0.8" height="1.4" fill="#555"/><rect x="877.9" y="293.9" width="1.3" height="1.0" fill="#777"/><rect x="875.6" y="301.1" width="1.3" height="1.1" fill="#777"/><rect x="879.4" y="301.7" width="1.8" height="1.1" fill="#8a8a8a"/><rect x="873.1" y="290.6" width="0.8" height="1.1" fill="#444"/><rect x="870.9" y="298.7" width="1.3" height="1.8" fill="#444"/><rect x="881.5" y="295.3" width="1.1" height="1.1" fill="#777"/><rect x="872.9" y="297.0" width="2.2" height="1.5" fill="#555"/><rect x="874.9" y="299.3" width="1.9" height="0.9" fill="#555"/><rect x="880.9" y="301.2" width="1.9" height="1.4" fill="#777"/><rect x="874.2" y="299.1" width="0.9" height="1.9" fill="#8a8a8a"/><rect x="874.6" y="300.6" width="0.9" height="1.0" fill="#777"/><rect x="868.5" y="298.5" width="1.5" height="1.6" fill="#8a8a8a"/><rect x="877.4" y="295.1" width="1.6" height="1.0" fill="#555"/><rect x="879.4" y="300.4" width="0.9" height="1.7" fill="#777"/><rect x="901.9" y="293.0" width="15.6" height="15.6" fill="#101010" filter="url(#bl1)" opacity="0.9"/><rect x="899.3" y="289.6" width="15.0" height="14.0" fill="url(#s24)"/><rect x="931.4" y="291.4" width="15.0" height="15.0" fill="#3a3a3a"/><rect x="930.4" y="290.2" width="15.2" height="15.2" fill="#535353"/><rect x="984.6" y="219" width="15.4" height="99" fill="#404040"/><defs><linearGradient id="sb"><stop offset="0" stop-color="#7c7c7c"/><stop offset="0.4" stop-color="#8c8c8c"/><stop offset="1" stop-color="#666"/></linearGradient></defs><rect x="986" y="238.4" width="12" height="29.2" rx="3" fill="url(#sb)"/><path d="M989.2 230.4L992 227.2L994.8 230.4Z M989.2 309.6L992 312.8L994.8 309.6Z" fill="#ececec"/><rect x="767" y="318" width="233" height="17.4" fill="#4a4a4a"/><rect x="767" y="317.6" width="233" height="1" fill="#5c5c5c"/><circle cx="907.6" cy="327.2" r="4.6" fill="none" stroke="#8a8a8a" stroke-width="1.4"/><path d="M904.4 324L910.8 330.4" stroke="#8a8a8a" stroke-width="1.4"/><path d="M933.4 323.6H942.4V332.6H938V328H933.4Z" fill="#8c8c8c"/><path d="M934 328.8H937.4V332.2Z" fill="#8c8c8c"/><g fill="none" stroke="#7a7a7a" stroke-width="1"><path d="M962.4 325.4H969.8L969 333H963.2Z"/><path d="M961.4 324.6H970.8M964.6 324.4V323H967.6V324.4M964.8 326.6V331.6M966.2 326.6V331.6M967.6 326.6V331.6"/></g><g fill="#6a6a6a"><rect x="996" y="327" width="1" height="1"/><rect x="994" y="329" width="1" height="1"/><rect x="996" y="329" width="1" height="1"/><rect x="992" y="331" width="1" height="1"/><rect x="994" y="331" width="1" height="1"/><rect x="996" y="331" width="1" height="1"/></g><rect x="767" y="335.4" width="233" height="2.6" fill="#363636"/></svg>
<div class="a" style="left:767.00px;top:338.40px;width:233.00px;height:16.60px;background:#3f3f3f;border-top:1px solid #4a4a4a;box-sizing:border-box"></div>
<div class="a" style="left:767.00px;top:354.40px;width:233.00px;height:1.00px;background:#383838;"></div>
<div class="a" style="left:767.00px;top:338.40px;width:36.80px;height:17.60px;background:#535353;border-top:1px solid #646464;border-right:1px solid #333;box-sizing:border-box"></div>
<div class="a t c" style="left:775.60px;top:341.60px;font-size:11.70px;line-height:11.70px;color:#f2f2f2;letter-spacing:0.2px">图层</div>
<div class="a" style="left:803.80px;top:338.40px;width:36.60px;height:16.00px;background:#474747;border-top:1px solid #545454;border-right:1px solid #353535;box-sizing:border-box"></div>
<div class="a t c" style="left:810.60px;top:341.60px;font-size:11.70px;line-height:11.70px;color:#b4b4b4;letter-spacing:0.2px">通道</div>
<div class="a" style="left:840.40px;top:338.40px;width:37.00px;height:16.00px;background:#474747;border-top:1px solid #545454;border-right:1px solid #353535;box-sizing:border-box"></div>
<div class="a t c" style="left:847.60px;top:341.60px;font-size:11.70px;line-height:11.70px;color:#b4b4b4;letter-spacing:0.2px">路径</div>
<svg class="a" style="left:981.00px;top:343.00px;" width="16" height="9" viewBox="0 0 16 9"><path d="M0.6 1.6H6L3.3 4.8Z" fill="#e4e4e4"/><g fill="#d8d8d8"><rect x="7" y="0.4" width="8.4" height="1"/><rect x="7" y="2.6" width="8.4" height="1"/><rect x="7" y="4.8" width="8.4" height="1"/><rect x="7" y="7" width="8.4" height="1"/></g></svg>
<div class="a" style="left:771.40px;top:359.00px;width:68.40px;height:19.40px;background:linear-gradient(#686868,#585858);border:1px solid #3a3a3a;border-radius:3.5px;box-sizing:border-box;box-shadow:0 1px 0 #5e5e5e, inset 0 1px 0 #747474"></div>
<div class="a t c" style="left:793.00px;top:361.80px;font-size:11.70px;line-height:11.70px;color:#c6c6c6;letter-spacing:0.1px">类型</div>
<svg class="a" style="left:767.00px;top:355.00px;" width="233" height="57" viewBox="767 355 233 57"><circle cx="783.4" cy="367.4" r="3.3" fill="none" stroke="#b8b8b8" stroke-width="1.3"/><path d="M781 370L777.6 373.4" stroke="#b8b8b8" stroke-width="1.5"/><path d="M829.6 367.4L832.6 364L835.6 367.4Z M829.6 369.6L832.6 373L835.6 369.6Z" fill="#d8d8d8"/><rect x="859.4" y="363.6" width="12.2" height="10.2" fill="none" stroke="#8c8c8c" stroke-width="1.1"/><path d="M860.6 372.6L863.6 368.6L866 371L868 369.4L870.6 372.6Z" fill="#8c8c8c"/><circle cx="868.6" cy="366.4" r="1" fill="#8c8c8c"/><circle cx="888.4" cy="368.6" r="4.6" fill="#8a8a8a" stroke="#9a9a9a" stroke-width="1"/><path d="M885.2 371.8A4.5 4.5 0 0 0 891.6 365.4Z" fill="#5a5a5a"/><path d="M906.8 364H917.4V366.6H916.6C916.4 365.4 916 365.2 915 365.2H913.2V372C913.2 372.8 913.6 373 914.8 373V373.8H909.4V373C910.6 373 911 372.8 911 372V365.2H909.2C908.2 365.2 907.8 365.4 907.6 366.6H906.8Z" fill="#959595"/><rect x="931.8" y="364.8" width="8.8" height="8.4" fill="none" stroke="#8c8c8c" stroke-width="1.1"/><g fill="#555" stroke="#909090" stroke-width="0.8"><circle cx="931.8" cy="364.8" r="1.2"/><circle cx="940.6" cy="364.8" r="1.2"/><circle cx="931.8" cy="373.2" r="1.2"/><circle cx="940.6" cy="373.2" r="1.2"/></g><path d="M957.6 363.8H962.4L964.8 366.2V373.6H957.6Z" fill="none" stroke="#8c8c8c" stroke-width="1"/><path d="M962.2 363.8V366.4H964.8" fill="none" stroke="#8c8c8c" stroke-width="0.8"/><rect x="954" y="368.4" width="6" height="6" fill="#8a8a8a"/><rect x="987.4" y="361" width="8.4" height="16" rx="1" fill="#484848" stroke="#3a3a3a" stroke-width="1"/><rect x="988" y="361.6" width="7.2" height="7" fill="#707070"/><rect x="767" y="382.2" width="233" height="1" fill="#3e3e3e"/><rect x="767" y="383.2" width="233" height="1" fill="#5b5b5b"/><rect x="767" y="409.4" width="233" height="1" fill="#3e3e3e"/><rect x="767" y="410.4" width="233" height="1" fill="#5b5b5b"/></svg>
<div class="a" style="left:771.40px;top:386.60px;width:108.00px;height:19.00px;background:linear-gradient(#686868,#585858);border:1px solid #3a3a3a;border-radius:3.5px;box-sizing:border-box;box-shadow:0 1px 0 #5e5e5e, inset 0 1px 0 #747474"></div>
<div class="a t c" style="left:779.20px;top:389.80px;font-size:11.70px;line-height:11.70px;color:#d0d0d0;letter-spacing:0.2px">正常</div>
<svg class="a" style="left:869.00px;top:391.00px;" width="8" height="11" viewBox="0 0 8 11"><path d="M0.6 3.8L3.6 0.4L6.6 3.8Z M0.6 6L3.6 9.4L6.6 6Z" fill="#d8d8d8"/></svg>
<div class="a t c" style="left:886.80px;top:389.80px;font-size:11.70px;line-height:11.70px;color:#c6c6c6;letter-spacing:0.2px">不透明度</div>
<div class="a t" style="left:935.00px;top:390.40px;font-size:12.00px;line-height:12.00px;color:#c6c6c6;">:</div>
<div class="a" style="left:943.00px;top:387.00px;width:52.60px;height:19.00px;background:#3c3c3c;border:1px solid #454545;border-radius:3px;box-sizing:border-box;box-shadow:0 1px 0 #5c5c5c"></div>
<div class="a" style="left:976.00px;top:388.00px;width:18.60px;height:17.00px;background:linear-gradient(#6c6c6c,#5a5a5a);border-radius:0 2px 2px 0;border-left:1px solid #444;box-sizing:border-box"></div>
<div class="a t" style="left:945.40px;top:391.20px;font-size:11.20px;line-height:11.20px;color:#cfcdb8;">100%</div>
<svg class="a" style="left:982.60px;top:394.60px;" width="7" height="5" viewBox="0 0 7 5"><path d="M0.4 0.6H6.2L3.3 3.8Z" fill="#dcdcdc"/></svg>
<div class="a t c" style="left:773.20px;top:416.20px;font-size:11.70px;line-height:11.70px;color:#b6b6b6;letter-spacing:0.2px">锁定</div>
<div class="a t" style="left:798.60px;top:416.80px;font-size:12.00px;line-height:12.00px;color:#b6b6b6;">:</div>
<svg class="a" style="left:805.00px;top:414.00px;" width="90" height="20" viewBox="805 414 90 20"><rect x="810.4" y="419" width="10.4" height="10.4" fill="#757575"/><g fill="#999"><rect x="810.4" y="419" width="3.5" height="3.5"/><rect x="817.3" y="419" width="3.5" height="3.5"/><rect x="813.9" y="422.5" width="3.4" height="3.4"/><rect x="810.4" y="425.9" width="3.5" height="3.5"/><rect x="817.3" y="425.9" width="3.5" height="3.5"/></g><path d="M845 416.2L846.2 417.2L839.6 426.6L837.8 425.4Z" fill="#909090"/><path d="M837.6 424.8C839.4 425.4 839.8 427.4 838.6 428.6C836.4 429.8 832.6 429.8 830.4 428.8C833 428.4 835 427 836.2 425Z" fill="#939393"/><g fill="#8e8e8e"><path d="M858.8 416.8L861.2 419.8H856.4ZM858.8 430.2L861.2 427.2H856.4ZM852.2 423.5L855.2 421.1V425.9ZM865.4 423.5L862.4 421.1V425.9Z"/><rect x="858.2" y="419" width="1.2" height="9"/><rect x="854.4" y="422.9" width="9" height="1.2"/></g><rect x="876.4" y="422.4" width="10" height="7.6" rx="0.8" fill="#8e8e8e"/><path d="M878.4 422.4V420.4A3 3 0 0 1 884.4 420.4V422.4" fill="none" stroke="#8e8e8e" stroke-width="1.6"/><rect x="880.8" y="424.6" width="1.2" height="3" fill="#535353"/></svg>
<div class="a t c" style="left:911.00px;top:416.40px;font-size:11.70px;line-height:11.70px;color:#c6c6c6;letter-spacing:0.2px">填充</div>
<div class="a t" style="left:935.00px;top:417.00px;font-size:12.00px;line-height:12.00px;color:#c6c6c6;">:</div>
<div class="a" style="left:943.00px;top:414.60px;width:52.60px;height:19.00px;background:#3c3c3c;border:1px solid #454545;border-radius:3px;box-sizing:border-box;box-shadow:0 1px 0 #5c5c5c"></div>
<div class="a" style="left:976.00px;top:415.60px;width:18.60px;height:17.00px;background:linear-gradient(#6c6c6c,#5a5a5a);border-radius:0 2px 2px 0;border-left:1px solid #444;box-sizing:border-box"></div>
<div class="a t" style="left:945.40px;top:418.80px;font-size:11.20px;line-height:11.20px;color:#cfcdb8;">100%</div>
<svg class="a" style="left:982.60px;top:422.20px;" width="7" height="5" viewBox="0 0 7 5"><path d="M0.4 0.6H6.2L3.3 3.8Z" fill="#dcdcdc"/></svg>
<div class="a" style="left:767.00px;top:438.60px;width:233.00px;height:265.00px;background:#454545;"></div>
<div class="a" style="left:767.00px;top:438.60px;width:233.00px;height:1.20px;background:#3a3a3a;"></div>
<div class="a" style="left:767.00px;top:439.80px;width:31.00px;height:30.60px;background:#535353;"></div>
<div class="a" style="left:798.00px;top:439.80px;width:187.40px;height:30.60px;background:#596579;"></div>
<div class="a" style="left:767.00px;top:470.40px;width:218.40px;height:1.00px;background:#363636;"></div>
<div class="a" style="left:797.40px;top:439.80px;width:0.80px;height:30.60px;background:#3e3e3e;"></div>
<div class="a" style="left:985.40px;top:439.80px;width:14.60px;height:263.00px;background:linear-gradient(90deg,#3c3c3c,#434343 30%,#515151);"></div>
<svg class="a" style="left:775.00px;top:447.00px;" width="14" height="12" viewBox="0 0 14 12"><path d="M0.8 6.2C3 2.6 5.4 1.4 7 1.4C8.6 1.4 11 2.6 13.2 6.2C11 9.6 8.6 10.8 7 10.8C5.4 10.8 3 9.6 0.8 6.2Z" fill="#a8a8a8"/><circle cx="7" cy="6" r="3.1" fill="#3a3a3a"/><circle cx="6" cy="5" r="1" fill="#c8c8c8"/></svg>
<div class="a t c" style="left:843.00px;top:449.00px;font-size:11.70px;line-height:11.70px;color:#fafafa;font-style:italic;letter-spacing:-0.1px">背景</div>
<svg class="a" style="left:957.00px;top:446.00px;" width="14" height="16" viewBox="0 0 14 16"><rect x="2.2" y="6.6" width="9.6" height="7.6" rx="0.8" fill="#7a8494" stroke="#e8e8e8" stroke-width="1.1"/><path d="M4.2 6.4V4.6A2.8 2.8 0 0 1 9.8 4.6V6.4" fill="none" stroke="#e8e8e8" stroke-width="1.3"/><rect x="6.4" y="9" width="1.3" height="3" fill="#f0f0f0"/><path d="M3.8 3.4A3.4 3.4 0 0 1 10 3" stroke="#333" stroke-width="0.8" fill="none"/></svg>
<div class="a" style="left:767.00px;top:701.40px;width:233.00px;height:18.60px;background:#4c4c4c;border-top:1px solid #5c5c5c;box-sizing:border-box"></div>
<svg class="a" style="left:795.00px;top:703.00px;" width="190" height="17" viewBox="795 703 190 17"><g fill="none" stroke="#9a9a9a" stroke-width="1.5"><rect x="801.6" y="708.4" width="7.4" height="5.8" rx="2.9"/><rect x="807" y="708.4" width="7.4" height="5.8" rx="2.9"/></g><rect x="805" y="710.6" width="6" height="1.4" fill="#9a9a9a"/><circle cx="859.8" cy="711.4" r="2.4" fill="#4c4c4c"/><rect x="854.6" y="706.6" width="13.4" height="9.8" fill="#b4b4b4"/><circle cx="861.3" cy="711.5" r="2.7" fill="#3f3f3f"/><circle cx="887.4" cy="711.4" r="5" fill="#c0c0c0"/><path d="M884 715A5 5 0 0 0 891 708Z" fill="#4c4c4c"/><circle cx="887.4" cy="711.4" r="5" fill="none" stroke="#c0c0c0" stroke-width="1.2"/><path d="M894.4 715.4H897.6L896 717.4Z" fill="#d8d8d8"/><path d="M908 705.6H912.6L914 707.4H920.4V716.4H908Z" fill="url(#ig)"/><path d="M935 706H945.4V716.6H940V711.4H935Z" fill="url(#ig)"/><path d="M935.4 712.4H939.2V716.4Z" fill="#c0c0c0"/><g fill="none" stroke="#7e7e7e" stroke-width="1"><path d="M962 708.6H970.4L969.6 716.8H962.8Z"/><path d="M960.8 707.8H971.6M964.4 707.6V706H968V707.6M964.4 710V715.4M966.2 710V715.4M968 710V715.4"/></g></svg>
<div class="a t" style="left:828.60px;top:704.20px;font-size:13.00px;line-height:13.00px;color:#9a9a9a;font-style:italic;font-family:'Liberation Serif',serif;letter-spacing:-0.3px">fx</div>
<svg class="a" style="left:842.60px;top:715.60px;" width="4" height="3" viewBox="0 0 4 3"><path d="M0 0.2H3.2L1.6 2.2Z" fill="#8a8a8a"/></svg>
<svg class="a" style="left:990.00px;top:646.00px;" width="10" height="60" viewBox="990 646 10 60"><path d="M1000 647.6H994.4Q992 647.6 992 650V702Q992 704.4 994.4 704.4H1000Z" fill="#2d3242" stroke="#3a4158" stroke-width="0.8"/><rect x="995" y="653" width="4.4" height="6" fill="#262a38"/><rect x="995" y="660.0" width="4.4" height="1.2" fill="#c86a3a"/><rect x="995" y="662.0" width="4.4" height="1.2" fill="#c86a3a"/><rect x="995" y="664.0" width="4.4" height="1.2" fill="#c8783a"/><rect x="995" y="666.0" width="4.4" height="1.2" fill="#c8883a"/><rect x="995" y="668.0" width="4.4" height="1.2" fill="#c8983a"/><rect x="995" y="670.0" width="4.4" height="1.2" fill="#c8a83a"/><rect x="995" y="672.0" width="4.4" height="1.2" fill="#c8b83a"/><rect x="995" y="674.0" width="4.4" height="1.2" fill="#c8b83a"/><rect x="995" y="676.0" width="4.4" height="1.2" fill="#c8c43a"/><rect x="995" y="678.0" width="4.4" height="1.2" fill="#bcc83a"/><rect x="995" y="680.0" width="4.4" height="1.2" fill="#a8c83a"/><rect x="995" y="682.0" width="4.4" height="1.2" fill="#90c040"/><rect x="995" y="684.0" width="4.4" height="1.2" fill="#78b848"/><rect x="995" y="686.0" width="4.4" height="1.2" fill="#60b058"/><rect x="995" y="688.0" width="4.4" height="1.2" fill="#60b058"/><rect x="995" y="690.0" width="4.4" height="1.2" fill="#48a868"/><rect x="995" y="692.0" width="4.4" height="1.2" fill="#3aa078"/><rect x="995" y="694.0" width="4.4" height="1.2" fill="#309a88"/><rect x="995" y="696.0" width="4.4" height="1.2" fill="#2c9490"/><rect x="995" y="698.0" width="4.4" height="1.2" fill="#2a9094"/></svg>
<div class="a t" style="left:41.80px;top:706.80px;font-size:10.80px;line-height:10.80px;color:#ececec;">100%</div>
<svg class="a" style="left:92.00px;top:705.40px;" width="14" height="14" viewBox="0 0 14 14"><circle cx="6.6" cy="6.8" r="5.6" fill="#d8d8d8"/><path d="M6.2 3.2V7.2H10.8" fill="none" stroke="#555" stroke-width="1.2"/><path d="M6.6 1.2A5.6 5.6 0 0 1 12.2 6.8H9A2.6 2.6 0 0 0 6.6 4Z" fill="#8a8a8a"/></svg>
<div class="a t c" style="left:143.20px;top:705.80px;font-size:11.80px;line-height:11.80px;color:#ececec;letter-spacing:-0.2px">文档</div>
<div class="a t" style="left:166.40px;top:706.40px;font-size:12.00px;line-height:12.00px;color:#ececec;">:</div>
<div class="a" style="left:168.00px;top:693.20px;width:201.00px;height:23.40px;background:#ffffff;border:1px solid #b4d0f2;border-radius:3px;box-sizing:border-box"></div>
<svg class="a" style="left:160.00px;top:686.00px;" width="212" height="34" viewBox="160 686 212 34"><g transform="rotate(-11 180 704)"><rect x="167.6" y="692.2" width="25" height="23.6" rx="3.6" fill="#f25a1c"/><path d="M189.6 697.2C185 695.6 175 695.4 173.2 699.4C171.6 703.4 186.6 702.6 186 706.2C185.4 709.2 175 709 170.4 707.2" fill="none" stroke="#fff" stroke-width="3.6" stroke-linecap="round"/></g><circle cx="223.4" cy="702.6" r="1.5" fill="none" stroke="#1c73d2" stroke-width="1.1"/><path d="M228.6 704.4H231.4V707.4C231.4 709.4 230.4 710.6 228.6 711.2V710C229.6 709.6 230 708.8 230 707.6H228.6Z" fill="#1c73d2"/><circle cx="249.2" cy="705" r="6.5" fill="none" stroke="#1c73d2" stroke-width="1.5"/><rect x="246.4" y="701.4" width="1.5" height="3" rx="0.7" fill="#1c73d2"/><rect x="250.6" y="701.4" width="1.5" height="3" rx="0.7" fill="#1c73d2"/><path d="M245.6 706.6C247.2 709.6 251.2 709.6 252.8 706.6" fill="none" stroke="#1c73d2" stroke-width="1.3"/><rect x="268.4" y="697" width="5.4" height="10" rx="2.7" fill="#1c73d2"/><path d="M265.8 703.4C265.8 710.4 276.4 710.4 276.4 703.4" fill="none" stroke="#1c73d2" stroke-width="1.5"/><rect x="270.4" y="708.4" width="1.5" height="3.4" fill="#1c73d2"/><rect x="268" y="711.2" width="6.2" height="1.5" fill="#1c73d2"/><rect x="284.6" y="699.6" width="15.4" height="11" rx="1.6" fill="#1c73d2"/><rect x="286.6" y="701.6" width="1.5" height="1.5" fill="#fff"/><rect x="289.1" y="701.6" width="1.5" height="1.5" fill="#fff"/><rect x="291.6" y="701.6" width="1.5" height="1.5" fill="#fff"/><rect x="294.1" y="701.6" width="1.5" height="1.5" fill="#fff"/><rect x="296.6" y="701.6" width="1.5" height="1.5" fill="#fff"/><rect x="287.2" y="704.0" width="1.5" height="1.5" fill="#fff"/><rect x="289.7" y="704.0" width="1.5" height="1.5" fill="#fff"/><rect x="292.2" y="704.0" width="1.5" height="1.5" fill="#fff"/><rect x="294.7" y="704.0" width="1.5" height="1.5" fill="#fff"/><rect x="297.2" y="704.0" width="1.5" height="1.5" fill="#fff"/><rect x="287.6" y="706.8" width="8.4" height="1.5" fill="#fff"/><rect x="297" y="706.8" width="1.4" height="1.5" fill="#fff"/><circle cx="314" cy="701" r="2.9" fill="#1c73d2"/><path d="M308 712C308 706.6 310.4 704.8 314 704.8C317.6 704.8 320 706.6 320 712Z" fill="#1c73d2"/><path d="M308.2 707.4L311 705V710Z" fill="#1c73d2"/><rect x="313.4" y="706.6" width="10.4" height="6" rx="0.8" fill="#1c73d2" stroke="#fff" stroke-width="0.8"/><path d="M332.6 698.6C334 700.2 337 700.2 338.4 698.6L342.4 700.6L340.8 704L339.4 703.4V711.6H331.6V703.4L330.2 704L328.6 700.6Z" fill="#1c73d2"/><path d="M361.2 698.2C358.6 697.6 356.4 699.8 357 702.6L350.4 709.2C349.6 710 349.6 711.2 350.4 711.8C351.2 712.6 352.2 712.6 353 711.8L359.6 705.2C362.4 705.8 364.6 703.6 364 701L361.8 703.2L359.6 702.6L359 700.4Z" fill="#1c73d2"/></svg>
<div class="a t c" style="left:199.00px;top:698.00px;font-size:14.40px;line-height:14.40px;color:#1c73d2;font-weight:bold">中</div>
<div class="a t" style="left:314.40px;top:706.80px;font-size:6.40px;line-height:6.40px;color:#fff;font-weight:bold;font-style:italic;letter-spacing:-0.2px">15</div>
<svg class="a" style="left:451.00px;top:82.00px;" width="2" height="15" viewBox="0 0 2 15"><path d="M1 0V15" stroke="#c8c8c8" stroke-width="1" stroke-dasharray="1 1"/></svg>
<svg class="a" style="left:41.00px;top:459.00px;" width="16" height="2" viewBox="0 0 16 2"><path d="M0 1H16" stroke="#c8c8c8" stroke-width="1" stroke-dasharray="1 1"/></svg>
<svg class="a" style="left:123.00px;top:217.00px;" width="520" height="367" viewBox="123 217 520 367"><defs>
<filter id="nz" x="0" y="0" width="100%" height="100%"><feTurbulence type="fractalNoise" baseFrequency="0.55" numOctaves="2" seed="4"/><feColorMatrix type="matrix" values="0 0 0 0 0.72  0 0 0 0 0.42  0 0 0 0 0.3  0.9 0.9 0 0 -0.78"/></filter>
<clipPath id="pc"><rect x="123" y="217" width="520" height="367"/></clipPath>
<filter id="b2" x="-20%" y="-20%" width="140%" height="140%"><feGaussianBlur stdDeviation="0.7"/></filter>
<filter id="b3" x="-30%" y="-30%" width="160%" height="160%"><feGaussianBlur stdDeviation="1.6"/></filter>
<filter id="b4" x="-30%" y="-30%" width="160%" height="160%"><feGaussianBlur stdDeviation="3"/></filter>
<filter id="b6" x="-40%" y="-40%" width="180%" height="180%"><feGaussianBlur stdDeviation="5"/></filter>
<filter id="b10" x="-50%" y="-50%" width="200%" height="200%"><feGaussianBlur stdDeviation="10"/></filter>
<filter id="b20" x="-60%" y="-60%" width="220%" height="220%"><feGaussianBlur stdDeviation="22"/></filter>
<filter id="b35" x="-80%" y="-80%" width="260%" height="260%"><feGaussianBlur stdDeviation="35"/></filter>
<radialGradient id="iris" cx="0.52" cy="0.46" r="0.5"><stop offset="0" stop-color="#6e4a1c"/><stop offset="0.3" stop-color="#8c6428"/><stop offset="0.62" stop-color="#a07a3a"/><stop offset="0.86" stop-color="#86683a"/><stop offset="1" stop-color="#4e3c24"/></radialGradient>
<clipPath id="eyec"><path d="M367.6 425C368.6 405 370.6 384 374 373C379 364.6 390 359.6 403 358.6C416 357.8 426 360 435 362.6C447 365 456 368.6 464 372.6C473 377 483 384 492.6 392.6C486 396.6 479.6 399.6 473 403.4C466 408 460 412 453.6 415.4C446 419.6 438 422.6 429.6 425C420 427.4 412 428.6 403 428.6C394 428.6 386 428 379 427.2Z"/></clipPath>
<linearGradient id="bgg" x2="0" y2="1"><stop offset="0" stop-color="#e4e2e7"/><stop offset="1" stop-color="#ecebef"/></linearGradient>
<linearGradient id="skinbase" x1="0" y1="0" x2="1" y2="0.25"><stop offset="0" stop-color="#f9e0d2"/><stop offset="0.55" stop-color="#f8dccc"/><stop offset="1" stop-color="#f4cdb9"/></linearGradient>
</defs><symbol id="ph" viewBox="123 217 520 367" preserveAspectRatio="none"><g clip-path="url(#pc)"><rect x="123" y="217" width="520" height="367" fill="url(#skinbase)"/><ellipse cx="660" cy="575" rx="95" ry="120" fill="#e9a58a" filter="url(#b35)"/><ellipse cx="655" cy="300" rx="40" ry="90" fill="#efbda6" filter="url(#b35)" opacity="0.8"/><ellipse cx="300" cy="255" rx="120" ry="40" fill="#fbe5da" filter="url(#b20)"/><ellipse cx="430" cy="520" rx="150" ry="45" fill="#fbe4da" filter="url(#b20)"/><ellipse cx="560" cy="330" rx="60" ry="40" fill="#f9dfd2" filter="url(#b20)" opacity="0.7"/><ellipse cx="300" cy="470" rx="30" ry="70" fill="#fbe6dc" filter="url(#b20)" opacity="0.9"/><ellipse cx="440" cy="385" rx="125" ry="62" transform="rotate(8 440 385)" fill="#ecc0a2" filter="url(#b20)" opacity="0.85"/><ellipse cx="600" cy="520" rx="90" ry="80" fill="#f0bca6" filter="url(#b35)" opacity="0.7"/><path d="M330 345C350 350 372 345 395 340C430 336 470 342 510 360C530 370 548 382 560 392C540 396 515 392 495 384C470 368 440 356 400 355C380 356 365 362 355 375C345 390 345 420 352 445C335 430 325 390 330 345Z" fill="#e6b595" filter="url(#b6)" opacity="0.85"/><ellipse cx="528" cy="372" rx="36" ry="13" transform="rotate(27 528 372)" fill="#d9a57e" filter="url(#b6)" opacity="0.85"/><ellipse cx="352" cy="418" rx="14" ry="34" fill="#e8b49c" filter="url(#b6)" opacity="0.8"/><path d="M368 432C400 442 440 436 470 418C490 406 505 398 520 396C510 412 490 432 460 444C425 456 390 452 368 432Z" fill="#e8b69c" filter="url(#b6)" opacity="0.9"/><ellipse cx="335" cy="392" rx="10" ry="26" fill="#f0c4ac" filter="url(#b6)" opacity="0.7"/><rect x="123" y="217" width="520" height="367" filter="url(#nz)" opacity="0.36"/><path d="M252 450C254 475 246 500 240 520C234 540 226 560 218 590" fill="none" stroke="#f2c4b0" stroke-width="30" filter="url(#b10)" opacity="0.6"/><path d="M178 217C182 260 184 300 188 325" fill="none" stroke="#f3ccb8" stroke-width="22" filter="url(#b10)" opacity="0.55"/><path d="M110 205H166C169 250 172 290 174 322C180 340 190 356 204 372C214 382 224 392 230 404C234 420 230 440 232 452C238 462 242 470 240 480C236 495 231 508 227 520C222 535 216 552 204 590H110Z" fill="url(#bgg)" filter="url(#b3)"/><path d="M185 430C200 450 215 475 225 500C215 540 205 570 200 590H165C175 540 180 480 185 430Z" fill="#eeedf1" filter="url(#b10)" opacity="0.8"/><g filter="url(#b3)"><path d="M190 350C205 366 222 376 240 386C246 396 250 410 252 440C246 452 240 462 236 470C228 462 224 450 226 440C228 425 228 405 224 394C214 382 200 372 190 350Z" fill="#dcae8c"/><path d="M222 386C232 390 244 396 250 406C253 420 252 432 249 442C240 440 232 432 228 420C225 408 224 396 222 386Z" fill="#cfc6c8"/><ellipse cx="242.6" cy="414" rx="9.6" ry="25" fill="#8a6a44"/><ellipse cx="243.4" cy="409" rx="6.4" ry="15" fill="#c2bcc6"/><path d="M226 440C234 446 244 446 250 442C248 452 242 462 237 468C230 462 225 452 226 440Z" fill="#e9b8a2"/></g><path d="M175 324C184 338 198 350 214 362C226 370 236 378 244 388" fill="none" stroke="#9a7c6a" stroke-width="12" stroke-linecap="round" filter="url(#b4)"/><path d="M176 326C186 340 200 352 214 362" fill="none" stroke="#80665a" stroke-width="7" stroke-linecap="round" filter="url(#b4)" opacity="0.8"/><g fill="none" stroke="#9c9ca8" stroke-width="2.2" stroke-linecap="round" filter="url(#b3)" opacity="0.9"><path d="M222 388Q209 380 196 366"/><path d="M222 392Q203 386 184 374"/><path d="M224 396Q198 394 172 386"/><path d="M225 400Q196 399 168 392"/><path d="M226 406Q201 408 176 404"/><path d="M227 410Q206 415 184 414"/><path d="M228 414Q212 420 196 420"/><path d="M224 392Q215 383 206 368"/><path d="M226 398Q203 401 180 398"/><path d="M228 446Q220 457 212 462"/><path d="M230 450Q224 461 218 466"/><path d="M226 442Q217 450 208 452"/></g><path d="M275 332C280 325 286 321 292 318C302 311 312 305.6 320 301C330 295.6 340 290.6 350 286C360 281 370 276.6 380 272.6C390 268.6 400 265.6 410 263.6C420 262 430 261.4 440 262C450 264 460 267.6 470 271C480 274.6 490 278 500 281.6C510 285 522 289 532 293C536 295 540 297 542 298.6C538 299.4 534 298.6 530 298C520 297 510 296 500 295C490 293.6 480 292 470 290.6C460 288 450 285.6 440 284.6C430 283.6 420 283.6 410 284.6C400 286.6 390 289.6 380 293.6C372 298 365 302 359 307C351 313.6 344 319.6 338 325C332 330 326 334 320 337C310 341 300 343 290 343.4C284 343 277 340 275 336Z" fill="#c59a80" filter="url(#b4)" opacity="0.95"/><path d="M282 331C290 322 304 313 320 305C334 298 348 291 362 285C366 289 360 297 352 304C344 312 336 320 326 328C316 334 304 339 292 339.6C286 339 282 336 282 331Z" fill="#986a52" filter="url(#b4)" opacity="0.8"/><path d="M362 284C380 275 400 268 420 266C440 265 460 270 480 277C470 279 455 277 440 277C420 277 400 281 384 288C374 292 364 292 362 284Z" fill="#b08468" filter="url(#b4)" opacity="0.55"/><g fill="none" stroke="#8a5e46" stroke-width="0.9" stroke-linecap="round" filter="url(#b2)" opacity="0.38"><path d="M376.3 288.9L384.9 286.3"/><path d="M400.8 281.8L405.7 280.4"/><path d="M461.6 279.7L471.1 279.0"/><path d="M343.0 298.4L349.9 295.0"/><path d="M280.9 328.4L287.2 327.1"/><path d="M407.1 271.6L415.9 269.8"/><path d="M371.7 281.2L376.7 280.5"/><path d="M299.3 319.7L309.0 317.5"/><path d="M317.1 326.5L323.7 322.5"/><path d="M305.1 332.5L312.9 329.3"/><path d="M445.8 273.1L452.6 273.5"/><path d="M291.0 320.3L297.2 318.3"/><path d="M284.8 337.3L290.1 333.3"/><path d="M422.5 274.0L429.0 273.2"/><path d="M389.7 273.0L398.4 268.5"/><path d="M403.4 280.5L408.5 280.0"/><path d="M327.1 313.5L330.8 310.1"/><path d="M302.6 334.2L307.9 331.3"/><path d="M456.5 281.5L463.2 281.2"/><path d="M357.9 299.3L362.7 296.5"/><path d="M416.8 279.0L422.0 279.0"/><path d="M288.2 327.8L296.0 325.9"/><path d="M325.3 321.4L331.1 316.3"/><path d="M315.3 311.3L319.8 308.4"/><path d="M391.0 285.9L395.0 281.7"/><path d="M476.3 281.5L483.4 281.9"/><path d="M371.1 292.6L377.2 288.6"/><path d="M290.4 339.9L294.6 336.9"/><path d="M427.8 269.6L436.3 271.4"/><path d="M378.1 288.8L382.8 285.9"/><path d="M298.4 334.0L303.6 330.2"/><path d="M480.1 284.9L490.0 285.8"/><path d="M350.6 303.0L356.0 298.0"/><path d="M330.2 303.6L336.9 302.3"/><path d="M467.1 280.6L474.6 280.9"/><path d="M287.4 326.6L296.0 324.5"/><path d="M327.9 317.2L335.7 313.1"/><path d="M384.7 285.4L390.9 282.6"/><path d="M311.8 319.3L320.0 315.9"/><path d="M317.8 325.8L324.6 321.3"/><path d="M283.9 334.6L289.6 332.1"/><path d="M346.7 307.1L353.8 303.0"/><path d="M324.4 316.2L332.5 313.0"/><path d="M326.4 319.2L334.6 314.7"/><path d="M472.1 284.3L479.7 284.7"/><path d="M300.0 332.9L308.0 327.4"/><path d="M390.0 282.3L396.8 277.0"/><path d="M411.7 276.3L419.9 274.7"/><path d="M376.7 289.2L384.2 286.0"/><path d="M281.3 326.9L288.2 324.7"/><path d="M304.4 327.3L310.3 321.6"/><path d="M343.3 297.8L347.4 294.5"/><path d="M315.4 311.3L320.2 307.8"/><path d="M343.4 300.7L350.5 296.9"/><path d="M308.4 329.9L312.4 326.8"/><path d="M310.8 318.2L316.1 316.6"/><path d="M324.2 304.3L331.0 300.0"/><path d="M358.3 291.1L365.9 288.8"/><path d="M422.4 273.3L431.4 273.0"/><path d="M324.2 306.3L331.7 303.6"/><path d="M465.7 283.3L473.7 283.0"/><path d="M446.3 270.2L451.5 272.1"/><path d="M371.3 281.6L379.4 280.5"/><path d="M327.6 310.4L332.7 307.0"/><path d="M471.8 279.3L480.8 283.2"/><path d="M368.1 284.8L377.4 281.2"/><path d="M333.7 305.2L342.3 300.3"/><path d="M312.6 318.7L317.8 316.4"/><path d="M338.6 301.8L347.0 298.8"/><path d="M283.9 334.3L290.0 332.5"/><path d="M411.8 272.3L417.9 270.9"/><path d="M477.5 279.8L485.3 281.8"/><path d="M379.9 285.1L386.8 279.8"/><path d="M405.7 273.5L413.3 272.3"/><path d="M314.8 318.7L321.0 314.7"/><path d="M401.8 277.5L406.8 276.0"/><path d="M346.2 309.4L353.5 303.5"/><path d="M286.3 338.9L292.4 335.2"/><path d="M392.8 279.8L400.1 278.7"/><path d="M329.0 308.9L336.6 303.6"/><path d="M317.2 323.7L322.1 321.5"/><path d="M389.2 278.6L395.4 276.8"/><path d="M451.7 272.8L458.7 275.0"/><path d="M349.1 296.4L354.2 293.7"/><path d="M420.1 269.5L426.1 270.5"/><path d="M415.0 276.9L420.1 276.6"/><path d="M472.9 284.8L481.2 283.1"/><path d="M428.9 270.5L437.0 272.0"/><path d="M392.2 273.1L398.6 273.6"/><path d="M296.3 329.8L301.7 325.3"/><path d="M372.2 279.7L377.4 277.8"/><path d="M283.9 323.4L291.5 321.5"/><path d="M441.1 270.4L448.2 271.7"/><path d="M370.4 287.5L378.9 282.9"/><path d="M288.4 335.9L293.5 333.2"/><path d="M355.4 303.4L361.7 298.8"/><path d="M309.5 321.8L315.3 319.5"/><path d="M351.2 291.5L356.5 288.4"/><path d="M399.0 272.5L407.5 272.9"/><path d="M290.6 334.0L294.7 330.4"/><path d="M367.6 284.7L376.4 281.3"/><path d="M321.4 320.8L326.0 318.5"/><path d="M283.2 325.8L292.5 323.0"/><path d="M300.0 317.2L309.4 314.4"/><path d="M422.7 270.2L430.8 269.4"/><path d="M303.2 320.3L310.3 316.3"/><path d="M327.1 304.9L335.8 302.1"/><path d="M418.4 273.9L427.6 273.0"/><path d="M369.3 289.3L376.9 285.0"/><path d="M285.9 321.9L290.9 318.6"/><path d="M444.0 274.6L452.7 273.9"/><path d="M348.6 307.3L354.7 301.9"/><path d="M341.1 296.7L345.8 293.3"/><path d="M327.0 309.7L334.6 304.2"/><path d="M305.7 317.9L310.7 315.0"/><path d="M304.5 322.8L309.5 321.4"/><path d="M330.4 318.9L337.6 314.6"/><path d="M349.4 307.9L353.9 304.6"/><path d="M315.1 321.6L321.6 315.9"/><path d="M296.7 316.8L301.9 313.5"/><path d="M336.5 316.4L341.5 311.6"/><path d="M343.1 299.0L351.1 295.7"/><path d="M294.5 322.5L302.7 320.9"/><path d="M379.2 282.8L387.0 276.7"/><path d="M289.6 337.2L294.5 332.1"/><path d="M364.1 299.3L369.4 293.9"/><path d="M286.0 322.7L294.8 319.3"/><path d="M460.1 273.8L466.3 274.3"/><path d="M328.4 302.8L334.1 300.2"/><path d="M312.4 310.1L317.6 309.4"/><path d="M298.5 326.4L304.8 323.2"/><path d="M287.3 327.6L292.4 325.3"/><path d="M454.3 277.8L463.6 277.8"/><path d="M284.2 334.3L290.8 331.0"/><path d="M329.3 313.3L337.4 310.6"/><path d="M316.0 316.5L323.4 311.2"/><path d="M290.2 326.1L295.4 324.5"/><path d="M422.5 272.1L428.0 270.5"/><path d="M302.6 315.4L309.3 313.1"/><path d="M302.5 314.9L309.5 310.2"/><path d="M298.8 321.4L304.4 317.4"/><path d="M334.5 304.6L342.3 300.5"/><path d="M445.9 276.7L454.6 278.1"/><path d="M342.9 309.5L350.3 306.0"/><path d="M397.2 279.4L403.5 279.1"/><path d="M326.4 305.1L331.0 302.3"/><path d="M310.4 324.0L315.1 319.5"/><path d="M407.0 276.5L411.8 274.6"/><path d="M292.1 326.3L301.1 324.2"/><path d="M371.2 283.1L377.7 280.1"/></g><path d="M350 366C360 350 382 341.6 410 340.6C440 340.6 472 349 500 365C520 381 540 394 558 402C540 402 524 398 506 392C492 384 476 375 462 370C444 363 424 358 400 357C382 357 366 361 357 371Z" fill="#c8946c" filter="url(#b3)" opacity="0.95"/><path d="M440 352C470 356 500 370 525 388C538 396 548 400 558 402C540 403 522 398 506 392C490 382 470 372 448 365Z" fill="#b98a62" filter="url(#b3)" opacity="0.6"/><g clip-path="url(#eyec)"><rect x="360" y="350" width="140" height="85" fill="#e4e0e8"/><ellipse cx="386" cy="402" rx="13" ry="26" fill="#f3f1f6" filter="url(#b4)"/><path d="M364 432C366 410 368 386 373 370L381 360C376 380 374.6 410 375 432Z" fill="#e29484" filter="url(#b3)"/><path d="M375 432C374.6 410 376 384 381 364L384 362C380 384 379 410 380 432Z" fill="#f0cfd0" filter="url(#b3)" opacity="0.8"/><ellipse cx="475" cy="393" rx="11" ry="11" fill="#dcd6dc" filter="url(#b3)"/><path d="M380 428C400 432 430 428 452 416C470 406 484 398 494 392L494 400L440 432L380 434Z" fill="#e8c4c0" filter="url(#b3)" opacity="0.7"/><circle cx="430.6" cy="391.6" r="31.4" fill="url(#iris)"/><circle cx="430.6" cy="391.6" r="30.6" fill="none" stroke="#45351f" stroke-width="2.6" filter="url(#b2)" opacity="0.85"/><g filter="url(#b2)" opacity="0.7"><ellipse cx="447" cy="404" rx="6" ry="8" fill="#b48444"/><ellipse cx="437" cy="415" rx="10" ry="4" fill="#a87a3c"/><ellipse cx="453" cy="389" rx="4" ry="9" fill="#a07838"/><ellipse cx="419" cy="412" rx="9" ry="4.4" fill="#94764a"/><circle cx="444" cy="398" r="2" fill="#6a3c14"/><circle cx="450" cy="409" r="1.6" fill="#70401a"/><circle cx="440" cy="408" r="1.4" fill="#704a20"/></g><path d="M398 384C402 368 415 358 432 358C448 358 458 366 463 380C455 372 445 368 432 368C418 368 406 374 398 384Z" fill="#2e2014" filter="url(#b3)" opacity="0.85"/><path d="M401.6 374C408 371 420 370.6 427.4 372L427.4 398.6C420 401.6 410 402.6 402 400.6C399.6 392 399.8 382 401.6 374Z" fill="#b6bac8" filter="url(#b3)"/><path d="M401.4 386C408 385 420 384.6 427.4 385L427.4 398.6C420 401.6 410 402.6 402 400.6C400.6 396 400.6 391 401.4 386Z" fill="#d2d3df" filter="url(#b3)" opacity="0.9"/><path d="M427.4 379.6C436 376.6 441.6 381.6 441.4 388C441.2 394.6 436 398.6 427.4 396Z" fill="#120d09" filter="url(#b2)"/><path d="M433.6 372.4C438 370.6 445 372 448 375.6C446 379 441.6 380.6 437.6 380C435.4 378.2 434 375.6 433.6 372.4Z" fill="#f0e2e0" filter="url(#b2)"/><path d="M366 374C380 357 410 355 440 361C465 367 482 379 494 393L494 386C480 368 460 358 436 354C410 350 382 352 366 366Z" fill="#3e2a1c" filter="url(#b3)" opacity="0.7"/></g><path d="M369 427.4C380 430.8 392 431.8 404 431.6C414 431.4 424 429.8 432 427.4C442 424.4 450 420.4 457 416.4C464 412.4 470 408.4 476 404.8C482 401.4 488 397.8 494 394.4" fill="none" stroke="#e9b7a8" stroke-width="3.8" filter="url(#b2)"/><path d="M370 431C381 435 393 436 405 435.8C417 435.4 429 432.8 439 429.4C451 424.8 463 417.4 475 410C483 405.4 491 400.4 498 396.6" fill="none" stroke="#d39882" stroke-width="1.8" filter="url(#b3)" opacity="0.75"/><ellipse cx="368.6" cy="421.6" rx="2.6" ry="6" transform="rotate(-8 368.6 421.6)" fill="#cf4a3a" filter="url(#b2)"/><path d="M366 405C365 412 365.4 420 367.4 427" fill="none" stroke="#d88472" stroke-width="2" filter="url(#b3)" opacity="0.8"/><path d="M438 360C452 363.6 464 368.6 474 374.6C484 380.6 494 387.6 504 392.6C510 395 516 396.4 524 397" fill="none" stroke="#6e4c36" stroke-width="2.6" stroke-linecap="round" filter="url(#b2)" opacity="0.9"/><path d="M357 370C364 362.6 376 357.4 392 356C408 355 424 356.8 440 360.6C450 363 458 366 466 370" fill="none" stroke="#2c1e15" stroke-width="3.4" stroke-linecap="round" filter="url(#b2)"/><path d="M370 349C392 343 420 343 450 351C480 359 505 373 528 389C540 396 548 400 558 402.6" fill="none" stroke="#bb8660" stroke-width="2" filter="url(#b3)" opacity="0.7"/><g fill="none" stroke="#2a1e16" stroke-linecap="round" filter="url(#b2)"><path d="M357.0 370.5Q335.4 367.9 321.6 359.6" stroke-width="0.9"/><path d="M357.0 370.5Q346.2 369.2 337.4 366.5" stroke-width="1.7"/><path d="M358.9 369.3Q341.1 363.0 330.4 351.5" stroke-width="0.9"/><path d="M358.9 369.3Q350.0 366.1 342.9 361.7" stroke-width="1.7"/><path d="M360.4 368.3Q344.5 359.4 335.8 345.1" stroke-width="0.9"/><path d="M360.4 368.3Q352.5 363.8 346.3 358.0" stroke-width="1.7"/><path d="M363.3 366.6Q355.2 354.7 353.3 338.0" stroke-width="0.9"/><path d="M363.3 366.6Q359.2 360.6 356.7 353.5" stroke-width="1.7"/><path d="M364.2 366.1Q356.7 357.9 353.9 346.2" stroke-width="0.9"/><path d="M364.2 366.1Q360.5 362.0 357.9 357.1" stroke-width="1.7"/><path d="M366.2 365.1Q353.9 351.9 349.2 333.0" stroke-width="0.9"/><path d="M366.2 365.1Q360.1 358.5 355.8 350.5" stroke-width="1.7"/><path d="M369.4 363.7Q361.7 352.6 359.9 337.0" stroke-width="0.9"/><path d="M369.4 363.7Q365.6 358.1 363.2 351.4" stroke-width="1.7"/><path d="M370.5 363.3Q363.6 352.3 362.3 337.1" stroke-width="0.9"/><path d="M370.5 363.3Q367.0 357.8 365.0 351.3" stroke-width="1.7"/><path d="M373.1 362.3Q367.4 351.3 367.3 336.0" stroke-width="0.9"/><path d="M373.1 362.3Q370.2 356.8 368.8 350.2" stroke-width="1.7"/><path d="M375.9 361.4Q370.7 352.2 370.3 339.5" stroke-width="0.9"/><path d="M375.9 361.4Q373.3 356.8 371.9 351.3" stroke-width="1.7"/><path d="M378.3 360.7Q371.1 348.8 370.1 332.4" stroke-width="0.9"/><path d="M378.3 360.7Q374.7 354.8 372.7 347.7" stroke-width="1.7"/><path d="M381.0 360.0Q375.5 349.6 375.4 335.2" stroke-width="0.9"/><path d="M381.0 360.0Q378.3 354.8 376.9 348.6" stroke-width="1.7"/><path d="M384.1 359.3Q376.8 348.6 375.2 333.7" stroke-width="0.9"/><path d="M384.1 359.3Q380.5 353.9 378.3 347.5" stroke-width="1.7"/><path d="M386.0 358.9Q382.2 350.1 382.8 338.0" stroke-width="0.9"/><path d="M386.0 358.9Q384.1 354.5 383.3 349.3" stroke-width="1.7"/><path d="M387.7 358.6Q385.5 352.1 386.5 343.2" stroke-width="0.9"/><path d="M387.7 358.6Q386.6 355.4 386.3 351.5" stroke-width="1.7"/><path d="M390.6 358.2Q385.8 349.8 385.4 338.1" stroke-width="0.9"/><path d="M390.6 358.2Q388.2 354.0 386.9 349.0" stroke-width="1.7"/><path d="M394.4 357.8Q390.5 350.4 390.3 340.2" stroke-width="0.9"/><path d="M394.4 357.8Q392.4 354.1 391.4 349.7" stroke-width="1.7"/><path d="M395.5 357.7Q390.9 349.1 390.6 337.3" stroke-width="0.9"/><path d="M395.5 357.7Q393.2 353.4 391.9 348.3" stroke-width="1.7"/><path d="M399.9 357.4Q397.3 349.7 398.4 339.2" stroke-width="0.9"/><path d="M399.9 357.4Q398.6 353.6 398.2 349.0" stroke-width="1.7"/><path d="M401.9 357.3Q399.6 352.0 399.9 344.7" stroke-width="0.9"/><path d="M401.9 357.3Q400.8 354.7 400.2 351.5" stroke-width="1.7"/><path d="M403.6 357.3Q400.6 347.3 402.5 333.7" stroke-width="0.9"/><path d="M403.6 357.3Q402.1 352.3 401.8 346.4" stroke-width="1.7"/><path d="M408.0 357.3Q406.4 349.3 408.7 338.4" stroke-width="0.9"/><path d="M408.0 357.3Q407.2 353.3 407.3 348.6" stroke-width="1.7"/><path d="M409.4 357.4Q407.7 348.0 410.7 335.1" stroke-width="0.9"/><path d="M409.4 357.4Q408.6 352.7 408.9 347.1" stroke-width="1.7"/><path d="M412.6 357.5Q410.0 349.1 411.7 337.5" stroke-width="0.9"/><path d="M412.6 357.5Q411.3 353.3 411.1 348.3" stroke-width="1.7"/><path d="M415.6 357.7Q414.0 352.7 414.8 345.9" stroke-width="0.9"/><path d="M415.6 357.7Q414.8 355.2 414.6 352.2" stroke-width="1.7"/><path d="M419.8 358.0Q418.8 349.9 421.9 338.7" stroke-width="0.9"/><path d="M419.8 358.0Q419.3 354.0 419.8 349.1" stroke-width="1.7"/><path d="M421.9 358.3Q420.4 348.8 423.7 335.7" stroke-width="0.9"/><path d="M421.9 358.3Q421.2 353.5 421.6 347.9" stroke-width="1.7"/><path d="M426.6 358.9Q425.3 349.8 428.6 337.5" stroke-width="0.9"/><path d="M426.6 358.9Q426.0 354.3 426.5 349.0" stroke-width="1.7"/><path d="M428.3 359.1Q426.9 350.3 429.9 338.2" stroke-width="0.9"/><path d="M428.3 359.1Q427.6 354.7 428.0 349.5" stroke-width="1.7"/><path d="M432.7 359.8Q432.4 354.1 435.0 346.2" stroke-width="0.9"/><path d="M432.7 359.8Q432.6 357.0 433.1 353.6" stroke-width="1.7"/><path d="M434.9 360.2Q434.2 352.2 437.6 341.1" stroke-width="0.9"/><path d="M434.9 360.2Q434.6 356.2 435.2 351.4" stroke-width="1.7"/><path d="M438.6 360.9Q438.1 354.6 440.8 346.0" stroke-width="0.9"/><path d="M438.6 360.9Q438.4 357.8 438.9 354.1" stroke-width="1.7"/><path d="M441.4 361.5Q440.4 355.0 442.7 346.1" stroke-width="0.9"/><path d="M441.4 361.5Q440.9 358.2 441.2 354.4" stroke-width="1.7"/><path d="M446.0 362.5Q445.6 355.9 448.4 346.9" stroke-width="0.9"/><path d="M446.0 362.5Q445.8 359.2 446.4 355.3" stroke-width="1.7"/></g><g fill="none" stroke="#352820" stroke-width="1.1" stroke-linecap="round" filter="url(#b2)"><path d="M358.0 378.0Q340.0 381.0 321.6 374.4"/><path d="M357.4 381.0Q340.0 388.0 324.0 388.0"/><path d="M357.4 386.0Q342.0 395.0 325.0 397.0"/><path d="M358.0 374.0Q344.0 373.0 327.0 364.0"/></g><g fill="none" stroke="#a07c68" stroke-width="1" stroke-linecap="round" filter="url(#b2)" opacity="0.6"><path d="M376.0 433.0L368.0 445.0"/><path d="M381.0 434.0L375.0 448.0"/><path d="M386.0 435.0L382.0 450.0"/><path d="M392.0 436.0L389.0 449.0"/><path d="M398.0 436.0L397.0 448.0"/><path d="M404.0 436.0L404.0 446.0"/><path d="M412.0 435.6L415.0 445.0"/><path d="M420.0 434.6L425.0 443.0"/><path d="M430.0 432.6L437.0 440.0"/><path d="M440.0 429.6L448.0 437.0"/><path d="M450.0 425.6L459.0 432.0"/><path d="M460.0 420.6L469.0 426.0"/><path d="M470.0 414.6L479.0 419.0"/></g></g></symbol><use href="#ph" x="123" y="217" width="520" height="367"/></svg>
<div class="a" style="left:800.60px;top:442.40px;width:31.60px;height:23.60px;background:#111;"></div>
<svg class="a" style="left:801.80px;top:443.60px;" width="29.2" height="21.2" viewBox="0 0 29.2 21.2"><use href="#ph" x="0" y="0" width="29.2" height="21.2"/></svg>
</body></html>
